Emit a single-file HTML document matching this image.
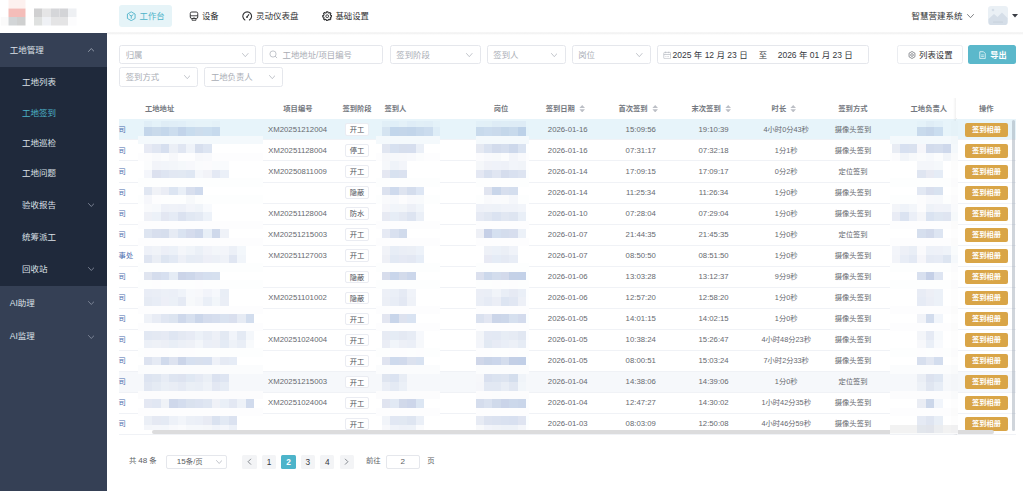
<!DOCTYPE html>
<html lang="zh-CN"><head><meta charset="utf-8"><title>工地签到</title>
<style>
*{box-sizing:border-box;margin:0;padding:0}
html,body{width:1023px;height:491px;overflow:hidden;background:#fff}
body{font-family:"Liberation Sans","Noto Sans CJK SC",sans-serif;color:#606266;position:relative;font-size:8.4px;line-height:1}
.abs{position:absolute}
.t{position:absolute;white-space:nowrap;line-height:10px;height:10px}
.c{transform:translateX(-50%)}
#hdr{position:absolute;left:0;top:0;width:1023px;height:33px;background:#fff}
#hsh{position:absolute;left:107px;top:32.2px;width:916px;height:3.2px;background:linear-gradient(to bottom,rgba(0,0,0,0.02) 0%,rgba(0,0,0,0.06) 35%,rgba(0,0,0,0) 100%)}
#side{position:absolute;left:0;top:33px;width:107px;height:458px;background:#354055}
#side .sub{position:absolute;left:0;top:33.8px;width:107px;height:219.4px;background:#1f293b}
#side .t{color:#dce0e7;font-size:8.5px}
.inp{position:absolute;height:19.5px;border:1px solid #e5e7ec;border-radius:2.5px;background:#fff}
.inp .t{top:3.9px;color:#a9adb5;font-size:8.4px}
.chev{position:absolute;top:7px;width:6px;height:4px}

.th{position:absolute;white-space:nowrap;line-height:10px;height:10px;top:103.6px;font-size:7.3px;font-weight:bold;color:#747880}
.row{position:absolute;left:119px;width:897px;height:21.05px;border-bottom:1px solid #f0f2f6}
.row .t{top:5.2px;font-size:7.3px;color:#66696f}
.row .n{font-size:7.75px;top:5.2px}
.row .lk{color:#4a6aae;left:-0.4px}
.tag{position:absolute;left:226.4px;top:3.8px;width:23.4px;height:12.4px;border:1px solid #eaecf2;border-radius:2px;background:#fff;text-align:center;font-size:7.3px;line-height:11.2px;color:#50545c}
.btn{position:absolute;left:846px;top:3.2px;width:43px;height:14.2px;border-radius:2px;background:#d9a547;color:#fff;font-weight:bold;font-size:7.2px;line-height:14px;text-align:center;white-space:nowrap}
.row .fk{color:#4a72b9;opacity:.85}

.pg{position:absolute;top:454.6px;height:14.2px;border-radius:1.5px;background:#f3f4f6;color:#34373d;font-size:8.3px;text-align:center;line-height:14px;width:14.2px}
.pt{position:absolute;top:456.4px;line-height:10px;font-size:7.35px;color:#606266;white-space:nowrap}
</style></head>
<body>
<div id="hdr">
<svg class="abs" style="left:0;top:0" width="107" height="33"><rect x="8.5" y="0" width="17" height="8.5" fill="#fdf1ef"/><rect x="8.5" y="8.5" width="17" height="8.5" fill="#f4bdb9"/><rect x="0.8" y="17" width="7.7" height="8.5" fill="#fafafa"/><rect x="8.5" y="17" width="8.5" height="8.5" fill="#d2d5d7"/><rect x="17" y="17" width="8.5" height="8.5" fill="#cfd0d0"/><rect x="34" y="8.5" width="8.5" height="8.5" fill="#d0d0d1"/><rect x="42.5" y="8.5" width="8.5" height="8.5" fill="#e5e5e6"/><rect x="51" y="8.5" width="8.5" height="8.5" fill="#d5d6d9"/><rect x="59.5" y="8.5" width="8.5" height="8.5" fill="#d3d4d7"/><rect x="68" y="8.5" width="8.5" height="8.5" fill="#eef0f3"/><rect x="34" y="17" width="8.5" height="8.5" fill="#dfe1e0"/><rect x="42.5" y="17" width="8.5" height="8.5" fill="#eff1f5"/><rect x="51" y="17" width="17" height="8.5" fill="#e4e4e5"/><rect x="68" y="17" width="8.5" height="8.5" fill="#fcfcfd"/></svg>
<div class="abs" style="left:119px;top:5px;width:53px;height:21.5px;background:#e6f4f8;border-radius:3px"></div>
<svg class="abs" style="left:126px;top:10.5px" width="10.5" height="10.5" viewBox="0 0 20 20"><path d="M10 1.6 L17.3 5.8 V14.2 L10 18.4 L2.7 14.2 V5.8 Z" fill="none" stroke="#4db3c9" stroke-width="1.7" stroke-linejoin="round"/><path d="M6.6 7.2 L10 9.6 L13.4 7.2 M10 9.6 V14" fill="none" stroke="#4db3c9" stroke-width="1.7" stroke-linecap="round"/></svg>
<div class="t" style="left:139.6px;top:11px;color:#4db3c9;font-size:8.4px">工作台</div>
<svg class="abs" style="left:188.8px;top:10.5px" width="10" height="10.5" viewBox="0 0 20 21"><rect x="2.5" y="2" width="15" height="13" rx="3" fill="none" stroke="#303133" stroke-width="1.9"/><path d="M2.5 9.5 H17.5" stroke="#303133" stroke-width="1.7"/><path d="M6 15 V18.5 H14 V15" fill="none" stroke="#303133" stroke-width="1.7"/><circle cx="10" cy="12.3" r="1" fill="#303133"/></svg>
<div class="t" style="left:202px;top:11px;color:#303133;font-size:8.4px">设备</div>
<svg class="abs" style="left:242.3px;top:11px" width="10.4" height="10.4" viewBox="0 0 20 20"><path d="M5.6 17.2 A8.4 8.4 0 1 1 14.4 17.2" fill="none" stroke="#303133" stroke-width="2.1" stroke-linecap="round"/><path d="M9.6 11.6 L13 7" stroke="#303133" stroke-width="2" stroke-linecap="round"/><circle cx="9.6" cy="11.6" r="1.7" fill="#303133"/></svg>
<div class="t" style="left:256px;top:11px;color:#303133;font-size:8.5px">灵动仪表盘</div>
<svg class="abs" style="left:321.9px;top:10.7px" width="10.4" height="10.4" viewBox="0 0 20 20"><path d="M8.49 1.33 L11.51 1.33 L11.61 3.29 L13.61 4.12 L15.06 2.80 L17.20 4.94 L15.88 6.39 L16.71 8.39 L18.67 8.49 L18.67 11.51 L16.71 11.61 L15.88 13.61 L17.20 15.06 L15.06 17.20 L13.61 15.88 L11.61 16.71 L11.51 18.67 L8.49 18.67 L8.39 16.71 L6.39 15.88 L4.94 17.20 L2.80 15.06 L4.12 13.61 L3.29 11.61 L1.33 11.51 L1.33 8.49 L3.29 8.39 L4.12 6.39 L2.80 4.94 L4.94 2.80 L6.39 4.12 L8.39 3.29 Z" fill="none" stroke="#303133" stroke-width="2" stroke-linejoin="round"/><circle cx="10" cy="10" r="2.7" fill="none" stroke="#303133" stroke-width="1.8"/></svg>
<div class="t" style="left:335.5px;top:11px;color:#303133;font-size:8.4px">基础设置</div>
<div class="t" style="left:911.5px;top:11px;color:#303133;font-size:8.5px">智慧营建系统</div>
<svg class="abs" style="left:966.6px;top:14.2px" width="7" height="4.2" viewBox="-0.5 -0.5 7 4.2"><path d="M0 0 L3.0 3.2 L6 0" fill="none" stroke="#606266" stroke-width="0.8" stroke-linecap="round" stroke-linejoin="round"/></svg>
<svg class="abs" style="left:988.4px;top:6.2px" width="20" height="19.2" viewBox="0 0 20 19.2"><rect width="20" height="19.2" rx="3.2" fill="#eaf0f5"/><path d="M0.5 13 L6 8 L9.5 11 L14 6.6 L19.5 12 V16 a3.2 3.2 0 0 1 -3.2 3.2 H3.7 A3.2 3.2 0 0 1 0.5 16 Z" fill="#d5dee8"/><circle cx="5" cy="4" r="1.3" fill="#d5dee8"/><rect x="5" y="15.6" width="10" height="1" fill="#c3cdd8" opacity=".7"/></svg>
<svg class="abs" style="left:1012.2px;top:14.3px" width="6" height="4" viewBox="0 0 6 4"><path d="M0 0 H6 L3 3.6 Z" fill="#3a3d45"/></svg>
</div>
<div id="hsh"></div>
<div id="side">
<div class="sub"></div>
<div class="t" style="left:9.8px;top:12px">工地管理</div>
<svg class="abs" style="left:87.6px;top:14.9px" width="6.6" height="4" viewBox="-0.5 -0.5 6.6 4"><path d="M0 3 L2.8 0 L5.6 3" fill="none" stroke="#a4acba" stroke-width="0.8" stroke-linecap="round" stroke-linejoin="round"/></svg>
<div class="t" style="left:22px;top:44.3px">工地列表</div>
<div class="t" style="left:22px;top:74.5px;color:#4db3c9">工地签到</div>
<div class="t" style="left:22px;top:104.6px">工地巡检</div>
<div class="t" style="left:22px;top:134.9px">工地问题</div>
<div class="t" style="left:22px;top:167px">验收报告</div>
<svg class="abs" style="left:87.6px;top:170.1px" width="6.6" height="4" viewBox="-0.5 -0.5 6.6 4"><path d="M0 0 L2.8 3 L5.6 0" fill="none" stroke="#8d96a6" stroke-width="0.8" stroke-linecap="round" stroke-linejoin="round"/></svg>
<div class="t" style="left:22px;top:199.2px">统筹派工</div>
<div class="t" style="left:22px;top:231px">回收站</div>
<svg class="abs" style="left:87.6px;top:234.1px" width="6.6" height="4" viewBox="-0.5 -0.5 6.6 4"><path d="M0 0 L2.8 3 L5.6 0" fill="none" stroke="#8d96a6" stroke-width="0.8" stroke-linecap="round" stroke-linejoin="round"/></svg>
<div class="t" style="left:9.8px;top:265.2px">AI助理</div>
<svg class="abs" style="left:87.6px;top:268.3px" width="6.6" height="4" viewBox="-0.5 -0.5 6.6 4"><path d="M0 0 L2.8 3 L5.6 0" fill="none" stroke="#8d96a6" stroke-width="0.8" stroke-linecap="round" stroke-linejoin="round"/></svg>
<div class="t" style="left:9.8px;top:298.4px">AI监理</div>
<svg class="abs" style="left:87.6px;top:301.5px" width="6.6" height="4" viewBox="-0.5 -0.5 6.6 4"><path d="M0 0 L2.8 3 L5.6 0" fill="none" stroke="#8d96a6" stroke-width="0.8" stroke-linecap="round" stroke-linejoin="round"/></svg>
</div>
<div class="inp" style="left:119px;top:44.8px;width:137px"><div class="t" style="left:5.7px">归属</div><svg class="abs" style="left:122.2px;top:7.2px" width="6.6" height="4.2" viewBox="-0.5 -0.5 6.6 4.2"><path d="M0 0 L2.8 3.2 L5.6 0" fill="none" stroke="#b4b8bf" stroke-width="0.8" stroke-linecap="round" stroke-linejoin="round"/></svg></div>
<div class="inp" style="left:262px;top:44.8px;width:121.4px"><svg class="abs" style="left:6.2px;top:4.6px" width="9" height="9" viewBox="0 0 9 9"><circle cx="4" cy="4" r="3.1" fill="none" stroke="#b4b8bf" stroke-width="0.8"/><path d="M6.3 6.3 L7.8 7.8" stroke="#b4b8bf" stroke-width="0.8" stroke-linecap="round"/></svg><div class="t" style="left:19.6px">工地地址/项目编号</div></div>
<div class="inp" style="left:389.6px;top:44.8px;width:91px"><div class="t" style="left:5.7px">签到阶段</div><svg class="abs" style="left:75.89999999999999px;top:7.2px" width="6.6" height="4.2" viewBox="-0.5 -0.5 6.6 4.2"><path d="M0 0 L2.8 3.2 L5.6 0" fill="none" stroke="#b4b8bf" stroke-width="0.8" stroke-linecap="round" stroke-linejoin="round"/></svg></div>
<div class="inp" style="left:486.6px;top:44.8px;width:79px"><div class="t" style="left:5.7px">签到人</div><svg class="abs" style="left:63.300000000000026px;top:7.2px" width="6.6" height="4.2" viewBox="-0.5 -0.5 6.6 4.2"><path d="M0 0 L2.8 3.2 L5.6 0" fill="none" stroke="#b4b8bf" stroke-width="0.8" stroke-linecap="round" stroke-linejoin="round"/></svg></div>
<div class="inp" style="left:571.5px;top:44.8px;width:79px"><div class="t" style="left:5.7px">岗位</div><svg class="abs" style="left:63.59999999999998px;top:7.2px" width="6.6" height="4.2" viewBox="-0.5 -0.5 6.6 4.2"><path d="M0 0 L2.8 3.2 L5.6 0" fill="none" stroke="#b4b8bf" stroke-width="0.8" stroke-linecap="round" stroke-linejoin="round"/></svg></div>
<div class="inp" style="left:656.5px;top:44.8px;width:212.3px"><svg class="abs" style="left:5.6px;top:5.1px" width="8.4" height="8.6" viewBox="0 0 16 16"><rect x="1.5" y="2.5" width="13" height="12" rx="1.5" fill="none" stroke="#b4b8c0" stroke-width="1.3"/><path d="M1.5 6.5 H14.5 M5 1 V4 M11 1 V4" stroke="#b4b8c0" stroke-width="1.3"/><path d="M4.5 10.5 h1.6 M7.2 10.5 h1.6 M9.9 10.5 h1.6" stroke="#b4b8c0" stroke-width="1.2"/></svg><div class="t" style="left:15px;color:#35383e;font-size:8.5px">2025 年 12 月 23 日</div><div class="t" style="left:101.3px;color:#35383e;font-size:8.3px">至</div><div class="t" style="left:120.2px;color:#35383e;font-size:8.5px">2026 年 01 月 23 日</div></div>
<div class="inp" style="left:897.3px;top:44.8px;width:65.3px;height:19.5px;border-color:#ebedf1"><svg class="abs" style="left:9.6px;top:5px" width="8" height="8" viewBox="0 0 16 16"><path d="M8 1 L13.9 4.4 V11.6 L8 15 L2.1 11.6 V4.4 Z" fill="none" stroke="#50545c" stroke-width="1.25" stroke-linejoin="round"/><circle cx="8" cy="8" r="2.7" fill="none" stroke="#50545c" stroke-width="1.2"/></svg><div class="t" style="left:20.8px;color:#303133;font-size:8.4px">列表设置</div></div>
<div class="abs" style="left:968.4px;top:44.8px;width:47.8px;height:19.5px;background:#5bb8cb;border-radius:2.5px"><svg class="abs" style="left:10.6px;top:6px" width="7" height="8.4" viewBox="0 0 14 17"><path d="M1.5 1.5 H9 L12.5 5 V15.5 H1.5 Z" fill="none" stroke="#fff" stroke-width="1.5" stroke-linejoin="round"/><path d="M4.2 8 H9.8 M4.2 11.4 H9.8" stroke="#fff" stroke-width="1.4"/></svg><div class="t" style="left:21.8px;top:6.3px;color:#fff;font-size:8.2px;font-weight:bold">导出</div></div>
<div class="inp" style="left:119px;top:67px;width:78.6px"><div class="t" style="left:5.7px">签到方式</div><svg class="abs" style="left:63.7px;top:7.2px" width="6.6" height="4.2" viewBox="-0.5 -0.5 6.6 4.2"><path d="M0 0 L2.8 3.2 L5.6 0" fill="none" stroke="#b4b8bf" stroke-width="0.8" stroke-linecap="round" stroke-linejoin="round"/></svg></div>
<div class="inp" style="left:204.2px;top:67px;width:78.5px"><div class="t" style="left:5.7px">工地负责人</div><svg class="abs" style="left:63.500000000000014px;top:7.2px" width="6.6" height="4.2" viewBox="-0.5 -0.5 6.6 4.2"><path d="M0 0 L2.8 3.2 L5.6 0" fill="none" stroke="#b4b8bf" stroke-width="0.8" stroke-linecap="round" stroke-linejoin="round"/></svg></div>
<div id="tbl">
<div class="abs" style="left:119px;top:118.9px;width:897px;height:1px;background:#edf0f5"></div>
<div class="th" style="left:145px">工地地址</div>
<div class="th c" style="left:297.9px">项目编号</div>
<div class="th c" style="left:357px">签到阶段</div>
<div class="th" style="left:384.5px">签到人</div>
<div class="th c" style="left:501.1px">岗位</div>
<div class="th" style="left:545.7px">签到日期</div>
<svg class="abs" style="left:579px;top:104.8px" width="6.4" height="7.6" viewBox="0 0 6.4 7.6"><path d="M3.2 0 L6 3 H0.4 Z M3.2 7.4 L6 4.3 H0.4 Z" fill="#bcbfc6"/></svg>
<div class="th" style="left:618.4px">首次签到</div>
<svg class="abs" style="left:652px;top:104.8px" width="6.4" height="7.6" viewBox="0 0 6.4 7.6"><path d="M3.2 0 L6 3 H0.4 Z M3.2 7.4 L6 4.3 H0.4 Z" fill="#bcbfc6"/></svg>
<div class="th" style="left:691.5px">末次签到</div>
<svg class="abs" style="left:725.2px;top:104.8px" width="6.4" height="7.6" viewBox="0 0 6.4 7.6"><path d="M3.2 0 L6 3 H0.4 Z M3.2 7.4 L6 4.3 H0.4 Z" fill="#bcbfc6"/></svg>
<div class="th" style="left:771.6px">时长</div>
<svg class="abs" style="left:790.2px;top:104.8px" width="6.4" height="7.6" viewBox="0 0 6.4 7.6"><path d="M3.2 0 L6 3 H0.4 Z M3.2 7.4 L6 4.3 H0.4 Z" fill="#bcbfc6"/></svg>
<div class="th c" style="left:852.9px">签到方式</div>
<div class="th c" style="left:928.8px">工地负责人</div>
<div class="row" style="top:119.40px;background:#e7f4fa">
<div class="t lk">司</div>
<div class="t n c" style="left:178.60000000000002px">XM20251212004</div>
<div class="tag">开工</div>
<div class="t n c" style="left:448.70000000000005px">2026-01-16</div>
<div class="t n c" style="left:521.7px">15:09:56</div>
<div class="t n c" style="left:594.6px">19:10:39</div>
<div class="t c" style="left:667.2px">4小时0分43秒</div>
<div class="t c" style="left:734px">摄像头签到</div>
</div>
<div class="row" style="top:140.45px">
<div class="t lk">司</div>
<div class="t n c" style="left:178.60000000000002px">XM20251128004</div>
<div class="tag">停工</div>
<div class="t n c" style="left:448.70000000000005px">2026-01-16</div>
<div class="t n c" style="left:521.7px">07:31:17</div>
<div class="t n c" style="left:594.6px">07:32:18</div>
<div class="t c" style="left:667.2px">1分1秒</div>
<div class="t c" style="left:734px">摄像头签到</div>
</div>
<div class="row" style="top:161.50px">
<div class="t lk">司</div>
<div class="t n c" style="left:178.60000000000002px">XM20250811009</div>
<div class="tag">开工</div>
<div class="t n c" style="left:448.70000000000005px">2026-01-14</div>
<div class="t n c" style="left:521.7px">17:09:15</div>
<div class="t n c" style="left:594.6px">17:09:17</div>
<div class="t c" style="left:667.2px">0分2秒</div>
<div class="t c" style="left:734px">定位签到</div>
</div>
<div class="row" style="top:182.55px">
<div class="t lk">司</div>
<div class="tag">隐蔽</div>
<div class="t n c" style="left:448.70000000000005px">2026-01-14</div>
<div class="t n c" style="left:521.7px">11:25:34</div>
<div class="t n c" style="left:594.6px">11:26:34</div>
<div class="t c" style="left:667.2px">1分0秒</div>
<div class="t c" style="left:734px">摄像头签到</div>
</div>
<div class="row" style="top:203.60px">
<div class="t lk">司</div>
<div class="t n c" style="left:178.60000000000002px">XM20251128004</div>
<div class="tag">防水</div>
<div class="t n c" style="left:448.70000000000005px">2026-01-10</div>
<div class="t n c" style="left:521.7px">07:28:04</div>
<div class="t n c" style="left:594.6px">07:29:04</div>
<div class="t c" style="left:667.2px">1分0秒</div>
<div class="t c" style="left:734px">摄像头签到</div>
</div>
<div class="row" style="top:224.65px">
<div class="t lk">司</div>
<div class="t n c" style="left:178.60000000000002px">XM20251215003</div>
<div class="tag">开工</div>
<div class="t n c" style="left:448.70000000000005px">2026-01-07</div>
<div class="t n c" style="left:521.7px">21:44:35</div>
<div class="t n c" style="left:594.6px">21:45:35</div>
<div class="t c" style="left:667.2px">1分0秒</div>
<div class="t c" style="left:734px">定位签到</div>
</div>
<div class="row" style="top:245.70px">
<div class="t lk">事处</div>
<div class="t n c" style="left:178.60000000000002px">XM20251127003</div>
<div class="tag">开工</div>
<div class="t n c" style="left:448.70000000000005px">2026-01-07</div>
<div class="t n c" style="left:521.7px">08:50:50</div>
<div class="t n c" style="left:594.6px">08:51:50</div>
<div class="t c" style="left:667.2px">1分0秒</div>
<div class="t c" style="left:734px">摄像头签到</div>
</div>
<div class="row" style="top:266.75px">
<div class="t lk">司</div>
<div class="tag">隐蔽</div>
<div class="t n c" style="left:448.70000000000005px">2026-01-06</div>
<div class="t n c" style="left:521.7px">13:03:28</div>
<div class="t n c" style="left:594.6px">13:12:37</div>
<div class="t c" style="left:667.2px">9分9秒</div>
<div class="t c" style="left:734px">摄像头签到</div>
</div>
<div class="row" style="top:287.80px">
<div class="t lk">司</div>
<div class="t n c" style="left:178.60000000000002px">XM20251101002</div>
<div class="tag">隐蔽</div>
<div class="t n c" style="left:448.70000000000005px">2026-01-06</div>
<div class="t n c" style="left:521.7px">12:57:20</div>
<div class="t n c" style="left:594.6px">12:58:20</div>
<div class="t c" style="left:667.2px">1分0秒</div>
<div class="t c" style="left:734px">摄像头签到</div>
</div>
<div class="row" style="top:308.85px">
<div class="t lk">司</div>
<div class="tag">开工</div>
<div class="t n c" style="left:448.70000000000005px">2026-01-05</div>
<div class="t n c" style="left:521.7px">14:01:15</div>
<div class="t n c" style="left:594.6px">14:02:15</div>
<div class="t c" style="left:667.2px">1分0秒</div>
<div class="t c" style="left:734px">摄像头签到</div>
</div>
<div class="row" style="top:329.90px">
<div class="t lk">司</div>
<div class="t n c" style="left:178.60000000000002px">XM20251024004</div>
<div class="tag">开工</div>
<div class="t n c" style="left:448.70000000000005px">2026-01-05</div>
<div class="t n c" style="left:521.7px">10:38:24</div>
<div class="t n c" style="left:594.6px">15:26:47</div>
<div class="t c" style="left:667.2px">4小时48分23秒</div>
<div class="t c" style="left:734px">摄像头签到</div>
</div>
<div class="row" style="top:350.95px">
<div class="t lk">司</div>
<div class="tag">开工</div>
<div class="t n c" style="left:448.70000000000005px">2026-01-05</div>
<div class="t n c" style="left:521.7px">08:00:51</div>
<div class="t n c" style="left:594.6px">15:03:24</div>
<div class="t c" style="left:667.2px">7小时2分33秒</div>
<div class="t c" style="left:734px">摄像头签到</div>
</div>
<div class="row" style="top:372.00px;background:#f6f8fb">
<div class="t lk">司</div>
<div class="t n c" style="left:178.60000000000002px">XM20251215003</div>
<div class="tag">开工</div>
<div class="t n c" style="left:448.70000000000005px">2026-01-04</div>
<div class="t n c" style="left:521.7px">14:38:06</div>
<div class="t n c" style="left:594.6px">14:39:06</div>
<div class="t c" style="left:667.2px">1分0秒</div>
<div class="t c" style="left:734px">定位签到</div>
</div>
<div class="row" style="top:393.05px">
<div class="t lk">司</div>
<div class="t n c" style="left:178.60000000000002px">XM20251024004</div>
<div class="tag">开工</div>
<div class="t n c" style="left:448.70000000000005px">2026-01-04</div>
<div class="t n c" style="left:521.7px">12:47:27</div>
<div class="t n c" style="left:594.6px">14:30:02</div>
<div class="t c" style="left:667.2px">1小时42分35秒</div>
<div class="t c" style="left:734px">摄像头签到</div>
</div>
<div class="row" style="top:414.10px">
<div class="t lk">司</div>
<div class="tag">开工</div>
<div class="t n c" style="left:448.70000000000005px">2026-01-03</div>
<div class="t n c" style="left:521.7px">08:03:09</div>
<div class="t n c" style="left:594.6px">12:50:08</div>
<div class="t c" style="left:667.2px">4小时46分59秒</div>
<div class="t c" style="left:734px">摄像头签到</div>
</div>
<div class="abs" style="left:952.6px;top:98px;width:4px;height:336.6px;background:linear-gradient(90deg,rgba(0,0,0,0),rgba(0,0,0,0.075))"></div>
<div class="abs" style="left:956.4px;top:98px;width:59.60000000000002px;height:20.4px;background:#fff"></div>
<div class="th c" style="left:986.2px">操作</div>
<div class="abs" style="left:956.4px;top:119.40px;width:59.60000000000002px;height:20.05px;background:#e7f4fa"><div class="btn" style="left:8.6px">签到相册</div></div>
<div class="abs" style="left:956.4px;top:140.45px;width:59.60000000000002px;height:20.05px;background:#fff"><div class="btn" style="left:8.6px">签到相册</div></div>
<div class="abs" style="left:956.4px;top:161.50px;width:59.60000000000002px;height:20.05px;background:#fff"><div class="btn" style="left:8.6px">签到相册</div></div>
<div class="abs" style="left:956.4px;top:182.55px;width:59.60000000000002px;height:20.05px;background:#fff"><div class="btn" style="left:8.6px">签到相册</div></div>
<div class="abs" style="left:956.4px;top:203.60px;width:59.60000000000002px;height:20.05px;background:#fff"><div class="btn" style="left:8.6px">签到相册</div></div>
<div class="abs" style="left:956.4px;top:224.65px;width:59.60000000000002px;height:20.05px;background:#fff"><div class="btn" style="left:8.6px">签到相册</div></div>
<div class="abs" style="left:956.4px;top:245.70px;width:59.60000000000002px;height:20.05px;background:#fff"><div class="btn" style="left:8.6px">签到相册</div></div>
<div class="abs" style="left:956.4px;top:266.75px;width:59.60000000000002px;height:20.05px;background:#fff"><div class="btn" style="left:8.6px">签到相册</div></div>
<div class="abs" style="left:956.4px;top:287.80px;width:59.60000000000002px;height:20.05px;background:#fff"><div class="btn" style="left:8.6px">签到相册</div></div>
<div class="abs" style="left:956.4px;top:308.85px;width:59.60000000000002px;height:20.05px;background:#fff"><div class="btn" style="left:8.6px">签到相册</div></div>
<div class="abs" style="left:956.4px;top:329.90px;width:59.60000000000002px;height:20.05px;background:#fff"><div class="btn" style="left:8.6px">签到相册</div></div>
<div class="abs" style="left:956.4px;top:350.95px;width:59.60000000000002px;height:20.05px;background:#fff"><div class="btn" style="left:8.6px">签到相册</div></div>
<div class="abs" style="left:956.4px;top:372.00px;width:59.60000000000002px;height:20.05px;background:#f6f8fb"><div class="btn" style="left:8.6px">签到相册</div></div>
<div class="abs" style="left:956.4px;top:393.05px;width:59.60000000000002px;height:20.05px;background:#fff"><div class="btn" style="left:8.6px">签到相册</div></div>
<div class="abs" style="left:956.4px;top:414.10px;width:59.60000000000002px;height:20.05px;background:#fff"><div class="btn" style="left:8.6px">签到相册</div></div>
<div class="abs" style="left:152px;top:430.2px;width:842.4px;height:3.6px;border-radius:2px;background:#dcdcdd"></div>
<div class="abs" style="left:1012.2px;top:120px;width:3.3px;height:311px;border-radius:2px;background:rgba(144,154,170,0.42)"></div>
<svg class="abs" style="left:0;top:0" width="1023" height="491" shape-rendering="crispEdges"><rect x="138" y="121" width="5.9" height="6.2" fill="#e7f4fa"/><rect x="143.9" y="121" width="8.5" height="6.2" fill="#e0eef7"/><rect x="152.4" y="121" width="8.5" height="6.2" fill="#e4f2f9"/><rect x="160.9" y="121" width="8.5" height="6.2" fill="#dfedf6"/><rect x="169.4" y="121" width="8.5" height="6.2" fill="#e0eef7"/><rect x="177.9" y="121" width="8.5" height="6.2" fill="#e1eff8"/><rect x="186.4" y="121" width="8.5" height="6.2" fill="#e5f2f9"/><rect x="194.9" y="121" width="17" height="6.2" fill="#e6f3f9"/><rect x="211.9" y="121" width="8.5" height="6.2" fill="#e4f1f8"/><rect x="220.4" y="121" width="42.1" height="6.2" fill="#e7f4fa"/><rect x="138" y="127.2" width="5.9" height="8.5" fill="#e7f4fa"/><rect x="143.9" y="127.2" width="8.5" height="8.5" fill="#c4d6ea"/><rect x="152.4" y="127.2" width="8.5" height="8.5" fill="#c9daeb"/><rect x="160.9" y="127.2" width="8.5" height="8.5" fill="#c4d7eb"/><rect x="169.4" y="127.2" width="8.5" height="8.5" fill="#ccddee"/><rect x="177.9" y="127.2" width="8.5" height="8.5" fill="#c2d4ea"/><rect x="186.4" y="127.2" width="8.5" height="8.5" fill="#c8dcee"/><rect x="194.9" y="127.2" width="8.5" height="8.5" fill="#cddded"/><rect x="203.4" y="127.2" width="8.5" height="8.5" fill="#cbdeef"/><rect x="211.9" y="127.2" width="8.5" height="8.5" fill="#c7daed"/><rect x="220.4" y="127.2" width="42.1" height="8.5" fill="#e7f4fa"/><rect x="138" y="135.7" width="124.5" height="8.5" fill="#f4f9fc"/><rect x="138" y="144.2" width="5.9" height="8.5" fill="#ffffff"/><rect x="143.9" y="144.2" width="8.5" height="8.5" fill="#e7eaf4"/><rect x="152.4" y="144.2" width="8.5" height="8.5" fill="#e0e6f2"/><rect x="160.9" y="144.2" width="8.5" height="8.5" fill="#d6dfef"/><rect x="169.4" y="144.2" width="8.5" height="8.5" fill="#ebeff6"/><rect x="177.9" y="144.2" width="8.5" height="8.5" fill="#e0e6f2"/><rect x="186.4" y="144.2" width="8.5" height="8.5" fill="#eff3f9"/><rect x="194.9" y="144.2" width="8.5" height="8.5" fill="#d7dfee"/><rect x="203.4" y="144.2" width="8.5" height="8.5" fill="#dde5f2"/><rect x="211.9" y="144.2" width="50.6" height="8.5" fill="#ffffff"/><rect x="138" y="152.7" width="5.9" height="8.5" fill="#fdfdfe"/><rect x="143.9" y="152.7" width="8.5" height="8.5" fill="#fcfcfd"/><rect x="152.4" y="152.7" width="8.5" height="8.5" fill="#f9fafc"/><rect x="160.9" y="152.7" width="8.5" height="8.5" fill="#fbfcfd"/><rect x="169.4" y="152.7" width="8.5" height="8.5" fill="#f7f8fb"/><rect x="177.9" y="152.7" width="17" height="8.5" fill="#fdfdfe"/><rect x="194.9" y="152.7" width="8.5" height="8.5" fill="#f7f8fb"/><rect x="203.4" y="152.7" width="8.5" height="8.5" fill="#f8f9fc"/><rect x="211.9" y="152.7" width="50.6" height="8.5" fill="#fdfdfe"/><rect x="138" y="161.2" width="5.9" height="8.5" fill="#ffffff"/><rect x="143.9" y="161.2" width="8.5" height="8.5" fill="#fbfcfd"/><rect x="152.4" y="161.2" width="8.5" height="8.5" fill="#f2f4f9"/><rect x="160.9" y="161.2" width="8.5" height="8.5" fill="#f2f5fa"/><rect x="169.4" y="161.2" width="8.5" height="8.5" fill="#f3f6fa"/><rect x="177.9" y="161.2" width="8.5" height="8.5" fill="#f5f8fb"/><rect x="186.4" y="161.2" width="8.5" height="8.5" fill="#f7f8fc"/><rect x="194.9" y="161.2" width="8.5" height="8.5" fill="#fafbfd"/><rect x="203.4" y="161.2" width="8.5" height="8.5" fill="#fbfbfd"/><rect x="211.9" y="161.2" width="17" height="8.5" fill="#f9fbfd"/><rect x="228.9" y="161.2" width="33.6" height="8.5" fill="#ffffff"/><rect x="138" y="169.7" width="5.9" height="8.5" fill="#ffffff"/><rect x="143.9" y="169.7" width="8.5" height="8.5" fill="#f4f6fb"/><rect x="152.4" y="169.7" width="8.5" height="8.5" fill="#dce1ef"/><rect x="160.9" y="169.7" width="8.5" height="8.5" fill="#dee5f2"/><rect x="169.4" y="169.7" width="8.5" height="8.5" fill="#e2e8f3"/><rect x="177.9" y="169.7" width="8.5" height="8.5" fill="#e2e9f3"/><rect x="186.4" y="169.7" width="8.5" height="8.5" fill="#dfe7f3"/><rect x="194.9" y="169.7" width="8.5" height="8.5" fill="#f5f7fb"/><rect x="203.4" y="169.7" width="8.5" height="8.5" fill="#f2f3f8"/><rect x="211.9" y="169.7" width="8.5" height="8.5" fill="#e4e9f4"/><rect x="220.4" y="169.7" width="8.5" height="8.5" fill="#ebf0f8"/><rect x="228.9" y="169.7" width="33.6" height="8.5" fill="#ffffff"/><rect x="138" y="178.2" width="124.5" height="8.5" fill="#fdfefe"/><rect x="138" y="186.7" width="5.9" height="8.5" fill="#ffffff"/><rect x="143.9" y="186.7" width="8.5" height="8.5" fill="#e1e7f2"/><rect x="152.4" y="186.7" width="8.5" height="8.5" fill="#f0f2f7"/><rect x="160.9" y="186.7" width="8.5" height="8.5" fill="#eaedf5"/><rect x="169.4" y="186.7" width="8.5" height="8.5" fill="#dce5f2"/><rect x="177.9" y="186.7" width="8.5" height="8.5" fill="#e9eff7"/><rect x="186.4" y="186.7" width="8.5" height="8.5" fill="#d8dfee"/><rect x="194.9" y="186.7" width="8.5" height="8.5" fill="#cfdaed"/><rect x="203.4" y="186.7" width="59.1" height="8.5" fill="#ffffff"/><rect x="138" y="195.2" width="5.9" height="8.5" fill="#fdfefe"/><rect x="143.9" y="195.2" width="8.5" height="8.5" fill="#f6f7fb"/><rect x="152.4" y="195.2" width="8.5" height="8.5" fill="#fdfdfe"/><rect x="160.9" y="195.2" width="25.5" height="8.5" fill="#fdfefe"/><rect x="186.4" y="195.2" width="8.5" height="8.5" fill="#f7f9fb"/><rect x="194.9" y="195.2" width="8.5" height="8.5" fill="#fcfdfd"/><rect x="203.4" y="195.2" width="59.1" height="8.5" fill="#fdfefe"/><rect x="138" y="203.7" width="5.9" height="8.5" fill="#ffffff"/><rect x="143.9" y="203.7" width="8.5" height="8.5" fill="#f9fafc"/><rect x="152.4" y="203.7" width="8.5" height="8.5" fill="#f7f9fc"/><rect x="160.9" y="203.7" width="8.5" height="8.5" fill="#eef1f8"/><rect x="169.4" y="203.7" width="8.5" height="8.5" fill="#eff2f8"/><rect x="177.9" y="203.7" width="8.5" height="8.5" fill="#eef1f8"/><rect x="186.4" y="203.7" width="8.5" height="8.5" fill="#f3f5fa"/><rect x="194.9" y="203.7" width="8.5" height="8.5" fill="#f0f4f9"/><rect x="203.4" y="203.7" width="8.5" height="8.5" fill="#f8fafd"/><rect x="211.9" y="203.7" width="50.6" height="8.5" fill="#ffffff"/><rect x="138" y="212.2" width="5.9" height="8.5" fill="#ffffff"/><rect x="143.9" y="212.2" width="8.5" height="8.5" fill="#eff1f7"/><rect x="152.4" y="212.2" width="8.5" height="8.5" fill="#ecf1f8"/><rect x="160.9" y="212.2" width="8.5" height="8.5" fill="#e3e7f2"/><rect x="169.4" y="212.2" width="8.5" height="8.5" fill="#e5ebf5"/><rect x="177.9" y="212.2" width="8.5" height="8.5" fill="#dbe2f0"/><rect x="186.4" y="212.2" width="8.5" height="8.5" fill="#e1e8f3"/><rect x="194.9" y="212.2" width="8.5" height="8.5" fill="#e4eaf4"/><rect x="203.4" y="212.2" width="8.5" height="8.5" fill="#edf2f9"/><rect x="211.9" y="212.2" width="50.6" height="8.5" fill="#ffffff"/><rect x="138" y="220.7" width="124.5" height="8.5" fill="#fdfdfe"/><rect x="138" y="229.2" width="5.9" height="8.5" fill="#ffffff"/><rect x="143.9" y="229.2" width="8.5" height="8.5" fill="#dee5f1"/><rect x="152.4" y="229.2" width="8.5" height="8.5" fill="#d8dfee"/><rect x="160.9" y="229.2" width="8.5" height="8.5" fill="#d6deed"/><rect x="169.4" y="229.2" width="8.5" height="8.5" fill="#e6ebf4"/><rect x="177.9" y="229.2" width="8.5" height="8.5" fill="#dae3f1"/><rect x="186.4" y="229.2" width="8.5" height="8.5" fill="#d5dced"/><rect x="194.9" y="229.2" width="8.5" height="8.5" fill="#ced8eb"/><rect x="203.4" y="229.2" width="8.5" height="8.5" fill="#e8eff7"/><rect x="211.9" y="229.2" width="8.5" height="8.5" fill="#cfd9eb"/><rect x="220.4" y="229.2" width="8.5" height="8.5" fill="#eff2f8"/><rect x="228.9" y="229.2" width="33.6" height="8.5" fill="#ffffff"/><rect x="138" y="237.7" width="124.5" height="8.5" fill="#fdfdfe"/><rect x="138" y="246.2" width="5.9" height="8.5" fill="#ffffff"/><rect x="143.9" y="246.2" width="8.5" height="8.5" fill="#eef1f8"/><rect x="152.4" y="246.2" width="8.5" height="8.5" fill="#f0f3f8"/><rect x="160.9" y="246.2" width="8.5" height="8.5" fill="#eceff7"/><rect x="169.4" y="246.2" width="8.5" height="8.5" fill="#ecf1f8"/><rect x="177.9" y="246.2" width="8.5" height="8.5" fill="#f4f6fa"/><rect x="186.4" y="246.2" width="8.5" height="8.5" fill="#f0f4f9"/><rect x="194.9" y="246.2" width="8.5" height="8.5" fill="#ebf0f7"/><rect x="203.4" y="246.2" width="8.5" height="8.5" fill="#f1f3f9"/><rect x="211.9" y="246.2" width="8.5" height="8.5" fill="#f3f6fa"/><rect x="220.4" y="246.2" width="8.5" height="8.5" fill="#f3f5fa"/><rect x="228.9" y="246.2" width="8.5" height="8.5" fill="#ecf0f7"/><rect x="237.4" y="246.2" width="8.5" height="8.5" fill="#f3f7fb"/><rect x="245.9" y="246.2" width="16.6" height="8.5" fill="#ffffff"/><rect x="138" y="254.7" width="5.9" height="8.5" fill="#ffffff"/><rect x="143.9" y="254.7" width="8.5" height="8.5" fill="#dfe5f1"/><rect x="152.4" y="254.7" width="8.5" height="8.5" fill="#eaeef5"/><rect x="160.9" y="254.7" width="8.5" height="8.5" fill="#dde5f1"/><rect x="169.4" y="254.7" width="8.5" height="8.5" fill="#e2e9f4"/><rect x="177.9" y="254.7" width="8.5" height="8.5" fill="#edf0f7"/><rect x="186.4" y="254.7" width="8.5" height="8.5" fill="#e6ecf5"/><rect x="194.9" y="254.7" width="8.5" height="8.5" fill="#e7ecf5"/><rect x="203.4" y="254.7" width="8.5" height="8.5" fill="#edeff7"/><rect x="211.9" y="254.7" width="8.5" height="8.5" fill="#ecf0f7"/><rect x="220.4" y="254.7" width="8.5" height="8.5" fill="#eff2f8"/><rect x="228.9" y="254.7" width="8.5" height="8.5" fill="#e0e6f2"/><rect x="237.4" y="254.7" width="8.5" height="8.5" fill="#f1f5fa"/><rect x="245.9" y="254.7" width="16.6" height="8.5" fill="#ffffff"/><rect x="138" y="263.2" width="124.5" height="8.5" fill="#fdfefe"/><rect x="138" y="271.7" width="5.9" height="8.5" fill="#ffffff"/><rect x="143.9" y="271.7" width="8.5" height="8.5" fill="#e0e5f0"/><rect x="152.4" y="271.7" width="8.5" height="8.5" fill="#d5dded"/><rect x="160.9" y="271.7" width="8.5" height="8.5" fill="#d7e0f0"/><rect x="169.4" y="271.7" width="8.5" height="8.5" fill="#e5ecf5"/><rect x="177.9" y="271.7" width="8.5" height="8.5" fill="#cbd4e8"/><rect x="186.4" y="271.7" width="8.5" height="8.5" fill="#cdd7ea"/><rect x="194.9" y="271.7" width="8.5" height="8.5" fill="#d4dced"/><rect x="203.4" y="271.7" width="8.5" height="8.5" fill="#d5dfef"/><rect x="211.9" y="271.7" width="8.5" height="8.5" fill="#d6e0ef"/><rect x="220.4" y="271.7" width="42.1" height="8.5" fill="#ffffff"/><rect x="138" y="280.2" width="14.4" height="8.5" fill="#fdfefe"/><rect x="152.4" y="280.2" width="8.5" height="8.5" fill="#fdfdfe"/><rect x="160.9" y="280.2" width="34" height="8.5" fill="#fdfefe"/><rect x="194.9" y="280.2" width="8.5" height="8.5" fill="#fdfdfe"/><rect x="203.4" y="280.2" width="59.1" height="8.5" fill="#fdfefe"/><rect x="138" y="288.7" width="5.9" height="8.5" fill="#ffffff"/><rect x="143.9" y="288.7" width="8.5" height="8.5" fill="#e9edf6"/><rect x="152.4" y="288.7" width="8.5" height="8.5" fill="#eaeef6"/><rect x="160.9" y="288.7" width="8.5" height="8.5" fill="#ecf0f7"/><rect x="169.4" y="288.7" width="8.5" height="8.5" fill="#ebeff7"/><rect x="177.9" y="288.7" width="8.5" height="8.5" fill="#eff3f9"/><rect x="186.4" y="288.7" width="8.5" height="8.5" fill="#f7f9fc"/><rect x="194.9" y="288.7" width="8.5" height="8.5" fill="#f7f8fb"/><rect x="203.4" y="288.7" width="8.5" height="8.5" fill="#f2f4fa"/><rect x="211.9" y="288.7" width="8.5" height="8.5" fill="#f6f8fc"/><rect x="220.4" y="288.7" width="8.5" height="8.5" fill="#e9eef6"/><rect x="228.9" y="288.7" width="33.6" height="8.5" fill="#ffffff"/><rect x="138" y="297.2" width="5.9" height="8.5" fill="#ffffff"/><rect x="143.9" y="297.2" width="8.5" height="8.5" fill="#e6ebf4"/><rect x="152.4" y="297.2" width="8.5" height="8.5" fill="#e8edf6"/><rect x="160.9" y="297.2" width="8.5" height="8.5" fill="#edeff7"/><rect x="169.4" y="297.2" width="8.5" height="8.5" fill="#ebf0f7"/><rect x="177.9" y="297.2" width="8.5" height="8.5" fill="#e5eaf4"/><rect x="186.4" y="297.2" width="8.5" height="8.5" fill="#f7f9fb"/><rect x="194.9" y="297.2" width="8.5" height="8.5" fill="#f4f6fa"/><rect x="203.4" y="297.2" width="8.5" height="8.5" fill="#eaeff7"/><rect x="211.9" y="297.2" width="8.5" height="8.5" fill="#f2f6fa"/><rect x="220.4" y="297.2" width="8.5" height="8.5" fill="#eaeef6"/><rect x="228.9" y="297.2" width="33.6" height="8.5" fill="#ffffff"/><rect x="138" y="305.7" width="124.5" height="8.5" fill="#fdfdfe"/><rect x="138" y="314.2" width="5.9" height="8.5" fill="#ffffff"/><rect x="143.9" y="314.2" width="8.5" height="8.5" fill="#eff2f8"/><rect x="152.4" y="314.2" width="8.5" height="8.5" fill="#e8ecf5"/><rect x="160.9" y="314.2" width="8.5" height="8.5" fill="#e0e6f2"/><rect x="169.4" y="314.2" width="8.5" height="8.5" fill="#dce4f0"/><rect x="177.9" y="314.2" width="8.5" height="8.5" fill="#ced8eb"/><rect x="186.4" y="314.2" width="8.5" height="8.5" fill="#d7e0ef"/><rect x="194.9" y="314.2" width="8.5" height="8.5" fill="#cbd6ea"/><rect x="203.4" y="314.2" width="8.5" height="8.5" fill="#d4dced"/><rect x="211.9" y="314.2" width="8.5" height="8.5" fill="#d6deee"/><rect x="220.4" y="314.2" width="8.5" height="8.5" fill="#d9e2f0"/><rect x="228.9" y="314.2" width="8.5" height="8.5" fill="#d9dfee"/><rect x="237.4" y="314.2" width="8.5" height="8.5" fill="#e6ebf4"/><rect x="245.9" y="314.2" width="8.5" height="8.5" fill="#d2ddee"/><rect x="254.4" y="314.2" width="8.1" height="8.5" fill="#ffffff"/><rect x="138" y="322.7" width="124.5" height="8.5" fill="#fdfdfe"/><rect x="138" y="331.2" width="5.9" height="8.5" fill="#ffffff"/><rect x="143.9" y="331.2" width="8.5" height="8.5" fill="#e2e8f3"/><rect x="152.4" y="331.2" width="8.5" height="8.5" fill="#e4e9f3"/><rect x="160.9" y="331.2" width="8.5" height="8.5" fill="#e6eaf4"/><rect x="169.4" y="331.2" width="8.5" height="8.5" fill="#dfe6f2"/><rect x="177.9" y="331.2" width="8.5" height="8.5" fill="#e4e9f3"/><rect x="186.4" y="331.2" width="8.5" height="8.5" fill="#e7ebf5"/><rect x="194.9" y="331.2" width="8.5" height="8.5" fill="#ecf1f8"/><rect x="203.4" y="331.2" width="8.5" height="8.5" fill="#e7ecf5"/><rect x="211.9" y="331.2" width="8.5" height="8.5" fill="#edf0f7"/><rect x="220.4" y="331.2" width="8.5" height="8.5" fill="#e3e9f3"/><rect x="228.9" y="331.2" width="8.5" height="8.5" fill="#f1f4fa"/><rect x="237.4" y="331.2" width="8.5" height="8.5" fill="#e4eaf4"/><rect x="245.9" y="331.2" width="8.5" height="8.5" fill="#f4f7fb"/><rect x="254.4" y="331.2" width="8.1" height="8.5" fill="#ffffff"/><rect x="138" y="339.7" width="5.9" height="8.5" fill="#ffffff"/><rect x="143.9" y="339.7" width="8.5" height="8.5" fill="#ecf0f7"/><rect x="152.4" y="339.7" width="8.5" height="8.5" fill="#eef1f7"/><rect x="160.9" y="339.7" width="8.5" height="8.5" fill="#eceff6"/><rect x="169.4" y="339.7" width="8.5" height="8.5" fill="#e8eef6"/><rect x="177.9" y="339.7" width="8.5" height="8.5" fill="#ecf0f7"/><rect x="186.4" y="339.7" width="8.5" height="8.5" fill="#eef1f7"/><rect x="194.9" y="339.7" width="8.5" height="8.5" fill="#f3f6fa"/><rect x="203.4" y="339.7" width="8.5" height="8.5" fill="#ebeff7"/><rect x="211.9" y="339.7" width="8.5" height="8.5" fill="#eceff6"/><rect x="220.4" y="339.7" width="8.5" height="8.5" fill="#e4ebf5"/><rect x="228.9" y="339.7" width="8.5" height="8.5" fill="#eef2f8"/><rect x="237.4" y="339.7" width="8.5" height="8.5" fill="#e9eef6"/><rect x="245.9" y="339.7" width="8.5" height="8.5" fill="#f8fafc"/><rect x="254.4" y="339.7" width="8.1" height="8.5" fill="#ffffff"/><rect x="138" y="348.2" width="5.9" height="8.5" fill="#fdfefe"/><rect x="143.9" y="348.2" width="25.5" height="8.5" fill="#fdfdfe"/><rect x="169.4" y="348.2" width="8.5" height="8.5" fill="#fdfefe"/><rect x="177.9" y="348.2" width="17" height="8.5" fill="#fdfdfe"/><rect x="194.9" y="348.2" width="67.6" height="8.5" fill="#fdfefe"/><rect x="138" y="356.7" width="5.9" height="8.5" fill="#ffffff"/><rect x="143.9" y="356.7" width="8.5" height="8.5" fill="#dde3f0"/><rect x="152.4" y="356.7" width="8.5" height="8.5" fill="#e5eaf4"/><rect x="160.9" y="356.7" width="8.5" height="8.5" fill="#d0daec"/><rect x="169.4" y="356.7" width="8.5" height="8.5" fill="#dde3f0"/><rect x="177.9" y="356.7" width="8.5" height="8.5" fill="#cbd5e9"/><rect x="186.4" y="356.7" width="8.5" height="8.5" fill="#d6e0f0"/><rect x="194.9" y="356.7" width="8.5" height="8.5" fill="#d8e0ee"/><rect x="203.4" y="356.7" width="8.5" height="8.5" fill="#d7e0f0"/><rect x="211.9" y="356.7" width="8.5" height="8.5" fill="#eef1f8"/><rect x="220.4" y="356.7" width="8.5" height="8.5" fill="#e5eaf4"/><rect x="228.9" y="356.7" width="8.5" height="8.5" fill="#e6ecf6"/><rect x="237.4" y="356.7" width="25.1" height="8.5" fill="#ffffff"/><rect x="138" y="365.2" width="124.5" height="8.5" fill="#fbfcfd"/><rect x="138" y="373.7" width="5.9" height="8.5" fill="#f6f8fb"/><rect x="143.9" y="373.7" width="8.5" height="8.5" fill="#dde4f1"/><rect x="152.4" y="373.7" width="8.5" height="8.5" fill="#dfe6f1"/><rect x="160.9" y="373.7" width="8.5" height="8.5" fill="#e7ecf5"/><rect x="169.4" y="373.7" width="8.5" height="8.5" fill="#dee5f1"/><rect x="177.9" y="373.7" width="8.5" height="8.5" fill="#dde3f0"/><rect x="186.4" y="373.7" width="8.5" height="8.5" fill="#e0e8f3"/><rect x="194.9" y="373.7" width="8.5" height="8.5" fill="#e5eaf4"/><rect x="203.4" y="373.7" width="8.5" height="8.5" fill="#eaeff6"/><rect x="211.9" y="373.7" width="8.5" height="8.5" fill="#dbe2f0"/><rect x="220.4" y="373.7" width="8.5" height="8.5" fill="#dee5f2"/><rect x="228.9" y="373.7" width="33.6" height="8.5" fill="#f6f8fb"/><rect x="138" y="382.2" width="5.9" height="8.5" fill="#f6f8fb"/><rect x="143.9" y="382.2" width="8.5" height="8.5" fill="#e1e7f2"/><rect x="152.4" y="382.2" width="8.5" height="8.5" fill="#e5ebf4"/><rect x="160.9" y="382.2" width="8.5" height="8.5" fill="#eaeff6"/><rect x="169.4" y="382.2" width="8.5" height="8.5" fill="#e9edf5"/><rect x="177.9" y="382.2" width="8.5" height="8.5" fill="#e5eaf4"/><rect x="186.4" y="382.2" width="8.5" height="8.5" fill="#eaeff6"/><rect x="194.9" y="382.2" width="8.5" height="8.5" fill="#e9eef6"/><rect x="203.4" y="382.2" width="8.5" height="8.5" fill="#eef2f8"/><rect x="211.9" y="382.2" width="8.5" height="8.5" fill="#e3e8f3"/><rect x="220.4" y="382.2" width="8.5" height="8.5" fill="#e6ecf5"/><rect x="228.9" y="382.2" width="33.6" height="8.5" fill="#f6f8fb"/><rect x="138" y="390.7" width="124.5" height="8.5" fill="#fcfcfd"/><rect x="138" y="399.2" width="5.9" height="8.5" fill="#ffffff"/><rect x="143.9" y="399.2" width="8.5" height="8.5" fill="#e4e8f3"/><rect x="152.4" y="399.2" width="8.5" height="8.5" fill="#e1e7f3"/><rect x="160.9" y="399.2" width="8.5" height="8.5" fill="#eff2f7"/><rect x="169.4" y="399.2" width="8.5" height="8.5" fill="#cfd8eb"/><rect x="177.9" y="399.2" width="8.5" height="8.5" fill="#d4ddee"/><rect x="186.4" y="399.2" width="8.5" height="8.5" fill="#dae2ef"/><rect x="194.9" y="399.2" width="8.5" height="8.5" fill="#dce3f1"/><rect x="203.4" y="399.2" width="8.5" height="8.5" fill="#dfe6f2"/><rect x="211.9" y="399.2" width="8.5" height="8.5" fill="#eff1f7"/><rect x="220.4" y="399.2" width="8.5" height="8.5" fill="#e9eff7"/><rect x="228.9" y="399.2" width="8.5" height="8.5" fill="#e3e8f3"/><rect x="237.4" y="399.2" width="8.5" height="8.5" fill="#eef2f8"/><rect x="245.9" y="399.2" width="8.5" height="8.5" fill="#d1dbed"/><rect x="254.4" y="399.2" width="8.1" height="8.5" fill="#ffffff"/><rect x="138" y="407.7" width="124.5" height="8.5" fill="#fdfdfe"/><rect x="138" y="416.2" width="5.9" height="8.5" fill="#ffffff"/><rect x="143.9" y="416.2" width="8.5" height="8.5" fill="#ebeff6"/><rect x="152.4" y="416.2" width="8.5" height="8.5" fill="#e5e9f3"/><rect x="160.9" y="416.2" width="8.5" height="8.5" fill="#e4eaf4"/><rect x="169.4" y="416.2" width="8.5" height="8.5" fill="#edf1f8"/><rect x="177.9" y="416.2" width="8.5" height="8.5" fill="#f2f5fa"/><rect x="186.4" y="416.2" width="8.5" height="8.5" fill="#ecf0f7"/><rect x="194.9" y="416.2" width="8.5" height="8.5" fill="#ebeff7"/><rect x="203.4" y="416.2" width="8.5" height="8.5" fill="#e8ebf4"/><rect x="211.9" y="416.2" width="8.5" height="8.5" fill="#dae2f0"/><rect x="220.4" y="416.2" width="8.5" height="8.5" fill="#e2e9f4"/><rect x="228.9" y="416.2" width="8.5" height="8.5" fill="#dbe2f0"/><rect x="237.4" y="416.2" width="25.1" height="8.5" fill="#ffffff"/><rect x="138" y="424.7" width="5.9" height="5.5" fill="#ffffff"/><rect x="143.9" y="424.7" width="8.5" height="5.5" fill="#f4f6fa"/><rect x="152.4" y="424.7" width="8.5" height="5.5" fill="#f5f7fb"/><rect x="160.9" y="424.7" width="8.5" height="5.5" fill="#f4f7fb"/><rect x="169.4" y="424.7" width="8.5" height="5.5" fill="#f8f9fc"/><rect x="177.9" y="424.7" width="8.5" height="5.5" fill="#fafbfd"/><rect x="186.4" y="424.7" width="17" height="5.5" fill="#f6f8fb"/><rect x="203.4" y="424.7" width="8.5" height="5.5" fill="#f5f7fa"/><rect x="211.9" y="424.7" width="8.5" height="5.5" fill="#f1f4fa"/><rect x="220.4" y="424.7" width="8.5" height="5.5" fill="#f4f6fb"/><rect x="228.9" y="424.7" width="8.5" height="5.5" fill="#edf1f8"/><rect x="237.4" y="424.7" width="25.1" height="5.5" fill="#ffffff"/><rect x="376" y="120.5" width="5.9" height="6.7" fill="#e7f4fa"/><rect x="381.9" y="120.5" width="8.5" height="6.7" fill="#e1eff7"/><rect x="390.4" y="120.5" width="8.5" height="6.7" fill="#e0eff8"/><rect x="398.9" y="120.5" width="8.5" height="6.7" fill="#e4f1f8"/><rect x="407.4" y="120.5" width="8.5" height="6.7" fill="#dfedf7"/><rect x="415.9" y="120.5" width="8.5" height="6.7" fill="#e1eff7"/><rect x="424.4" y="120.5" width="8.5" height="6.7" fill="#e0eef7"/><rect x="432.9" y="120.5" width="7.1" height="6.7" fill="#e4f2f9"/><rect x="376" y="127.2" width="5.9" height="8.5" fill="#e7f4fa"/><rect x="381.9" y="127.2" width="8.5" height="8.5" fill="#d5e4f1"/><rect x="390.4" y="127.2" width="8.5" height="8.5" fill="#c2d6eb"/><rect x="398.9" y="127.2" width="8.5" height="8.5" fill="#c4d6ea"/><rect x="407.4" y="127.2" width="8.5" height="8.5" fill="#c2d5ea"/><rect x="415.9" y="127.2" width="8.5" height="8.5" fill="#c7d9ec"/><rect x="424.4" y="127.2" width="8.5" height="8.5" fill="#cbdcee"/><rect x="432.9" y="127.2" width="7.1" height="8.5" fill="#deedf7"/><rect x="376" y="135.7" width="64" height="8.5" fill="#f4f9fc"/><rect x="376" y="144.2" width="5.9" height="8.5" fill="#ffffff"/><rect x="381.9" y="144.2" width="8.5" height="8.5" fill="#e1e6f1"/><rect x="390.4" y="144.2" width="8.5" height="8.5" fill="#d7e1f0"/><rect x="398.9" y="144.2" width="8.5" height="8.5" fill="#d6deed"/><rect x="407.4" y="144.2" width="8.5" height="8.5" fill="#d6deee"/><rect x="415.9" y="144.2" width="8.5" height="8.5" fill="#eaeff7"/><rect x="424.4" y="144.2" width="15.6" height="8.5" fill="#ffffff"/><rect x="376" y="152.7" width="5.9" height="8.5" fill="#fdfdfe"/><rect x="381.9" y="152.7" width="8.5" height="8.5" fill="#f6f7fa"/><rect x="390.4" y="152.7" width="8.5" height="8.5" fill="#f6f8fb"/><rect x="398.9" y="152.7" width="8.5" height="8.5" fill="#f7f8fb"/><rect x="407.4" y="152.7" width="8.5" height="8.5" fill="#f8f9fc"/><rect x="415.9" y="152.7" width="8.5" height="8.5" fill="#fbfcfd"/><rect x="424.4" y="152.7" width="15.6" height="8.5" fill="#fdfdfe"/><rect x="376" y="161.2" width="5.9" height="8.5" fill="#ffffff"/><rect x="381.9" y="161.2" width="8.5" height="8.5" fill="#f6f8fb"/><rect x="390.4" y="161.2" width="8.5" height="8.5" fill="#eff3f9"/><rect x="398.9" y="161.2" width="8.5" height="8.5" fill="#f3f5fa"/><rect x="407.4" y="161.2" width="32.6" height="8.5" fill="#ffffff"/><rect x="376" y="169.7" width="5.9" height="8.5" fill="#ffffff"/><rect x="381.9" y="169.7" width="8.5" height="8.5" fill="#e5e8f2"/><rect x="390.4" y="169.7" width="8.5" height="8.5" fill="#d8e2f0"/><rect x="398.9" y="169.7" width="8.5" height="8.5" fill="#dbe2f0"/><rect x="407.4" y="169.7" width="32.6" height="8.5" fill="#ffffff"/><rect x="376" y="178.2" width="64" height="8.5" fill="#fdfefe"/><rect x="376" y="186.7" width="5.9" height="8.5" fill="#ffffff"/><rect x="381.9" y="186.7" width="8.5" height="8.5" fill="#dce2ef"/><rect x="390.4" y="186.7" width="8.5" height="8.5" fill="#cedaed"/><rect x="398.9" y="186.7" width="8.5" height="8.5" fill="#dee4f0"/><rect x="407.4" y="186.7" width="8.5" height="8.5" fill="#d4dded"/><rect x="415.9" y="186.7" width="8.5" height="8.5" fill="#dde6f4"/><rect x="424.4" y="186.7" width="15.6" height="8.5" fill="#ffffff"/><rect x="376" y="195.2" width="5.9" height="8.5" fill="#fdfefe"/><rect x="381.9" y="195.2" width="8.5" height="8.5" fill="#f9fafc"/><rect x="390.4" y="195.2" width="8.5" height="8.5" fill="#f7f9fc"/><rect x="398.9" y="195.2" width="8.5" height="8.5" fill="#fcfcfd"/><rect x="407.4" y="195.2" width="8.5" height="8.5" fill="#f8f9fc"/><rect x="415.9" y="195.2" width="8.5" height="8.5" fill="#f8fafc"/><rect x="424.4" y="195.2" width="15.6" height="8.5" fill="#fdfefe"/><rect x="376" y="203.7" width="5.9" height="8.5" fill="#ffffff"/><rect x="381.9" y="203.7" width="8.5" height="8.5" fill="#f5f6fa"/><rect x="390.4" y="203.7" width="8.5" height="8.5" fill="#f1f5fa"/><rect x="398.9" y="203.7" width="8.5" height="8.5" fill="#f2f5f9"/><rect x="407.4" y="203.7" width="8.5" height="8.5" fill="#edf0f7"/><rect x="415.9" y="203.7" width="8.5" height="8.5" fill="#f1f5fa"/><rect x="424.4" y="203.7" width="15.6" height="8.5" fill="#ffffff"/><rect x="376" y="212.2" width="5.9" height="8.5" fill="#ffffff"/><rect x="381.9" y="212.2" width="8.5" height="8.5" fill="#e7eaf3"/><rect x="390.4" y="212.2" width="8.5" height="8.5" fill="#e6edf6"/><rect x="398.9" y="212.2" width="8.5" height="8.5" fill="#e4e9f3"/><rect x="407.4" y="212.2" width="8.5" height="8.5" fill="#dde4f1"/><rect x="415.9" y="212.2" width="8.5" height="8.5" fill="#eaeff7"/><rect x="424.4" y="212.2" width="15.6" height="8.5" fill="#ffffff"/><rect x="376" y="220.7" width="64" height="8.5" fill="#fdfdfe"/><rect x="376" y="229.2" width="5.9" height="8.5" fill="#ffffff"/><rect x="381.9" y="229.2" width="8.5" height="8.5" fill="#e6eaf4"/><rect x="390.4" y="229.2" width="8.5" height="8.5" fill="#d9e1f0"/><rect x="398.9" y="229.2" width="8.5" height="8.5" fill="#d1dbec"/><rect x="407.4" y="229.2" width="32.6" height="8.5" fill="#ffffff"/><rect x="376" y="237.7" width="64" height="8.5" fill="#fdfdfe"/><rect x="376" y="246.2" width="5.9" height="8.5" fill="#ffffff"/><rect x="381.9" y="246.2" width="8.5" height="8.5" fill="#f1f3f8"/><rect x="390.4" y="246.2" width="8.5" height="8.5" fill="#e7edf6"/><rect x="398.9" y="246.2" width="8.5" height="8.5" fill="#eaeef6"/><rect x="407.4" y="246.2" width="8.5" height="8.5" fill="#ebeff6"/><rect x="415.9" y="246.2" width="8.5" height="8.5" fill="#edf2f9"/><rect x="424.4" y="246.2" width="15.6" height="8.5" fill="#ffffff"/><rect x="376" y="254.7" width="5.9" height="8.5" fill="#ffffff"/><rect x="381.9" y="254.7" width="8.5" height="8.5" fill="#eef0f6"/><rect x="390.4" y="254.7" width="8.5" height="8.5" fill="#e2e9f4"/><rect x="398.9" y="254.7" width="8.5" height="8.5" fill="#e5e9f4"/><rect x="407.4" y="254.7" width="8.5" height="8.5" fill="#e3e8f3"/><rect x="415.9" y="254.7" width="8.5" height="8.5" fill="#e6edf7"/><rect x="424.4" y="254.7" width="15.6" height="8.5" fill="#ffffff"/><rect x="376" y="263.2" width="64" height="8.5" fill="#fdfefe"/><rect x="376" y="271.7" width="5.9" height="8.5" fill="#ffffff"/><rect x="381.9" y="271.7" width="8.5" height="8.5" fill="#d7ddec"/><rect x="390.4" y="271.7" width="8.5" height="8.5" fill="#c9d6eb"/><rect x="398.9" y="271.7" width="8.5" height="8.5" fill="#d3dbeb"/><rect x="407.4" y="271.7" width="8.5" height="8.5" fill="#ccd7eb"/><rect x="415.9" y="271.7" width="24.1" height="8.5" fill="#ffffff"/><rect x="376" y="280.2" width="64" height="8.5" fill="#fdfefe"/><rect x="376" y="288.7" width="5.9" height="8.5" fill="#ffffff"/><rect x="381.9" y="288.7" width="8.5" height="8.5" fill="#edf0f7"/><rect x="390.4" y="288.7" width="8.5" height="8.5" fill="#eaeff7"/><rect x="398.9" y="288.7" width="8.5" height="8.5" fill="#e5eaf4"/><rect x="407.4" y="288.7" width="8.5" height="8.5" fill="#f0f3f9"/><rect x="415.9" y="288.7" width="24.1" height="8.5" fill="#ffffff"/><rect x="376" y="297.2" width="5.9" height="8.5" fill="#ffffff"/><rect x="381.9" y="297.2" width="8.5" height="8.5" fill="#eceff6"/><rect x="390.4" y="297.2" width="8.5" height="8.5" fill="#e8edf6"/><rect x="398.9" y="297.2" width="8.5" height="8.5" fill="#e3e8f3"/><rect x="407.4" y="297.2" width="8.5" height="8.5" fill="#eff2f8"/><rect x="415.9" y="297.2" width="24.1" height="8.5" fill="#ffffff"/><rect x="376" y="305.7" width="64" height="8.5" fill="#fdfdfe"/><rect x="376" y="314.2" width="5.9" height="8.5" fill="#ffffff"/><rect x="381.9" y="314.2" width="8.5" height="8.5" fill="#e3e6f1"/><rect x="390.4" y="314.2" width="8.5" height="8.5" fill="#c8d5ea"/><rect x="398.9" y="314.2" width="8.5" height="8.5" fill="#dde2ef"/><rect x="407.4" y="314.2" width="8.5" height="8.5" fill="#d9e3f2"/><rect x="415.9" y="314.2" width="24.1" height="8.5" fill="#ffffff"/><rect x="376" y="322.7" width="64" height="8.5" fill="#fdfdfe"/><rect x="376" y="331.2" width="5.9" height="8.5" fill="#ffffff"/><rect x="381.9" y="331.2" width="8.5" height="8.5" fill="#e7ebf4"/><rect x="390.4" y="331.2" width="8.5" height="8.5" fill="#e5ecf5"/><rect x="398.9" y="331.2" width="8.5" height="8.5" fill="#e4e9f3"/><rect x="407.4" y="331.2" width="8.5" height="8.5" fill="#e7ecf5"/><rect x="415.9" y="331.2" width="8.5" height="8.5" fill="#f6f8fc"/><rect x="424.4" y="331.2" width="15.6" height="8.5" fill="#ffffff"/><rect x="376" y="339.7" width="5.9" height="8.5" fill="#ffffff"/><rect x="381.9" y="339.7" width="8.5" height="8.5" fill="#eaedf5"/><rect x="390.4" y="339.7" width="8.5" height="8.5" fill="#f1f5fa"/><rect x="398.9" y="339.7" width="8.5" height="8.5" fill="#edf0f7"/><rect x="407.4" y="339.7" width="8.5" height="8.5" fill="#ebeff7"/><rect x="415.9" y="339.7" width="8.5" height="8.5" fill="#f6f8fb"/><rect x="424.4" y="339.7" width="15.6" height="8.5" fill="#ffffff"/><rect x="376" y="348.2" width="14.4" height="8.5" fill="#fdfefe"/><rect x="390.4" y="348.2" width="17" height="8.5" fill="#fdfdfe"/><rect x="407.4" y="348.2" width="8.5" height="8.5" fill="#fdfefe"/><rect x="415.9" y="348.2" width="8.5" height="8.5" fill="#fdfdfe"/><rect x="424.4" y="348.2" width="15.6" height="8.5" fill="#fdfefe"/><rect x="376" y="356.7" width="5.9" height="8.5" fill="#ffffff"/><rect x="381.9" y="356.7" width="8.5" height="8.5" fill="#e0e4f0"/><rect x="390.4" y="356.7" width="8.5" height="8.5" fill="#cedaed"/><rect x="398.9" y="356.7" width="8.5" height="8.5" fill="#d1daec"/><rect x="407.4" y="356.7" width="8.5" height="8.5" fill="#dce2ef"/><rect x="415.9" y="356.7" width="8.5" height="8.5" fill="#d8e2f1"/><rect x="424.4" y="356.7" width="15.6" height="8.5" fill="#ffffff"/><rect x="376" y="365.2" width="64" height="8.5" fill="#fbfcfd"/><rect x="376" y="373.7" width="5.9" height="8.5" fill="#f6f8fb"/><rect x="381.9" y="373.7" width="8.5" height="8.5" fill="#dfe5f0"/><rect x="390.4" y="373.7" width="8.5" height="8.5" fill="#dbe3f1"/><rect x="398.9" y="373.7" width="8.5" height="8.5" fill="#e8edf5"/><rect x="407.4" y="373.7" width="32.6" height="8.5" fill="#f6f8fb"/><rect x="376" y="382.2" width="5.9" height="8.5" fill="#f6f8fb"/><rect x="381.9" y="382.2" width="8.5" height="8.5" fill="#eaeef6"/><rect x="390.4" y="382.2" width="8.5" height="8.5" fill="#e4eaf4"/><rect x="398.9" y="382.2" width="8.5" height="8.5" fill="#ebf0f7"/><rect x="407.4" y="382.2" width="32.6" height="8.5" fill="#f6f8fb"/><rect x="376" y="390.7" width="64" height="8.5" fill="#fcfcfd"/><rect x="376" y="399.2" width="5.9" height="8.5" fill="#ffffff"/><rect x="381.9" y="399.2" width="8.5" height="8.5" fill="#e0e4f0"/><rect x="390.4" y="399.2" width="8.5" height="8.5" fill="#e1e9f4"/><rect x="398.9" y="399.2" width="8.5" height="8.5" fill="#d1d9ea"/><rect x="407.4" y="399.2" width="8.5" height="8.5" fill="#cdd6ea"/><rect x="415.9" y="399.2" width="8.5" height="8.5" fill="#dce6f3"/><rect x="424.4" y="399.2" width="15.6" height="8.5" fill="#ffffff"/><rect x="376" y="407.7" width="64" height="8.5" fill="#fdfdfe"/><rect x="376" y="416.2" width="5.9" height="8.5" fill="#ffffff"/><rect x="381.9" y="416.2" width="8.5" height="8.5" fill="#f1f4f9"/><rect x="390.4" y="416.2" width="8.5" height="8.5" fill="#e1e7f3"/><rect x="398.9" y="416.2" width="8.5" height="8.5" fill="#e1e8f2"/><rect x="407.4" y="416.2" width="8.5" height="8.5" fill="#dee5f1"/><rect x="415.9" y="416.2" width="8.5" height="8.5" fill="#eaeff7"/><rect x="424.4" y="416.2" width="15.6" height="8.5" fill="#ffffff"/><rect x="376" y="424.7" width="5.9" height="5.5" fill="#ffffff"/><rect x="381.9" y="424.7" width="8.5" height="5.5" fill="#f7f8fb"/><rect x="390.4" y="424.7" width="8.5" height="5.5" fill="#f0f3f9"/><rect x="398.9" y="424.7" width="8.5" height="5.5" fill="#eef1f8"/><rect x="407.4" y="424.7" width="8.5" height="5.5" fill="#eef2f8"/><rect x="415.9" y="424.7" width="8.5" height="5.5" fill="#fafbfd"/><rect x="424.4" y="424.7" width="15.6" height="5.5" fill="#ffffff"/><rect x="476" y="120.5" width="7.9" height="6.7" fill="#e2f0f8"/><rect x="483.9" y="120.5" width="8.5" height="6.7" fill="#e2f0f7"/><rect x="492.4" y="120.5" width="8.5" height="6.7" fill="#deecf6"/><rect x="500.9" y="120.5" width="8.5" height="6.7" fill="#deedf6"/><rect x="509.4" y="120.5" width="17" height="6.7" fill="#deecf6"/><rect x="526.4" y="120.5" width="2.6" height="6.7" fill="#e6f4fa"/><rect x="476" y="127.2" width="7.9" height="8.5" fill="#c8daec"/><rect x="483.9" y="127.2" width="8.5" height="8.5" fill="#cbdcee"/><rect x="492.4" y="127.2" width="8.5" height="8.5" fill="#cadaec"/><rect x="500.9" y="127.2" width="8.5" height="8.5" fill="#c4d7ea"/><rect x="509.4" y="127.2" width="8.5" height="8.5" fill="#c8daec"/><rect x="517.9" y="127.2" width="8.5" height="8.5" fill="#bcd1e8"/><rect x="526.4" y="127.2" width="2.6" height="8.5" fill="#e5f3fa"/><rect x="476" y="135.7" width="53" height="8.5" fill="#f4f9fc"/><rect x="476" y="144.2" width="7.9" height="8.5" fill="#e5e9f2"/><rect x="483.9" y="144.2" width="8.5" height="8.5" fill="#dae2f0"/><rect x="492.4" y="144.2" width="8.5" height="8.5" fill="#d2dbec"/><rect x="500.9" y="144.2" width="8.5" height="8.5" fill="#d5deee"/><rect x="509.4" y="144.2" width="8.5" height="8.5" fill="#cdd8eb"/><rect x="517.9" y="144.2" width="8.5" height="8.5" fill="#dae3f1"/><rect x="526.4" y="144.2" width="2.6" height="8.5" fill="#feffff"/><rect x="476" y="152.7" width="7.9" height="8.5" fill="#fbfbfd"/><rect x="483.9" y="152.7" width="8.5" height="8.5" fill="#f8f9fc"/><rect x="492.4" y="152.7" width="8.5" height="8.5" fill="#f7f9fb"/><rect x="500.9" y="152.7" width="8.5" height="8.5" fill="#fbfcfd"/><rect x="509.4" y="152.7" width="8.5" height="8.5" fill="#f3f5fa"/><rect x="517.9" y="152.7" width="8.5" height="8.5" fill="#f8f9fc"/><rect x="526.4" y="152.7" width="2.6" height="8.5" fill="#fdfdfe"/><rect x="476" y="161.2" width="7.9" height="8.5" fill="#f5f7fa"/><rect x="483.9" y="161.2" width="8.5" height="8.5" fill="#f0f2f8"/><rect x="492.4" y="161.2" width="8.5" height="8.5" fill="#eff2f9"/><rect x="500.9" y="161.2" width="8.5" height="8.5" fill="#eef1f8"/><rect x="509.4" y="161.2" width="8.5" height="8.5" fill="#f2f5fa"/><rect x="517.9" y="161.2" width="8.5" height="8.5" fill="#f1f4f9"/><rect x="526.4" y="161.2" width="2.6" height="8.5" fill="#fefeff"/><rect x="476" y="169.7" width="7.9" height="8.5" fill="#e4e8f3"/><rect x="483.9" y="169.7" width="8.5" height="8.5" fill="#d8e0ef"/><rect x="492.4" y="169.7" width="8.5" height="8.5" fill="#e0e6f2"/><rect x="500.9" y="169.7" width="8.5" height="8.5" fill="#d5dded"/><rect x="509.4" y="169.7" width="8.5" height="8.5" fill="#d9e1f0"/><rect x="517.9" y="169.7" width="8.5" height="8.5" fill="#dde4f1"/><rect x="526.4" y="169.7" width="2.6" height="8.5" fill="#fcfeff"/><rect x="476" y="178.2" width="53" height="8.5" fill="#fdfefe"/><rect x="476" y="186.7" width="7.9" height="8.5" fill="#ffffff"/><rect x="483.9" y="186.7" width="8.5" height="8.5" fill="#e1e5f0"/><rect x="492.4" y="186.7" width="8.5" height="8.5" fill="#c9d6ea"/><rect x="500.9" y="186.7" width="8.5" height="8.5" fill="#d7dfee"/><rect x="509.4" y="186.7" width="8.5" height="8.5" fill="#d4deee"/><rect x="517.9" y="186.7" width="11.1" height="8.5" fill="#ffffff"/><rect x="476" y="195.2" width="7.9" height="8.5" fill="#fdfefe"/><rect x="483.9" y="195.2" width="8.5" height="8.5" fill="#f9fafc"/><rect x="492.4" y="195.2" width="8.5" height="8.5" fill="#fafbfd"/><rect x="500.9" y="195.2" width="8.5" height="8.5" fill="#fafbfc"/><rect x="509.4" y="195.2" width="8.5" height="8.5" fill="#f5f7fb"/><rect x="517.9" y="195.2" width="11.1" height="8.5" fill="#fdfefe"/><rect x="476" y="203.7" width="7.9" height="8.5" fill="#eef1f8"/><rect x="483.9" y="203.7" width="8.5" height="8.5" fill="#eff2f8"/><rect x="492.4" y="203.7" width="8.5" height="8.5" fill="#eef2f8"/><rect x="500.9" y="203.7" width="17" height="8.5" fill="#f0f3f9"/><rect x="517.9" y="203.7" width="8.5" height="8.5" fill="#f2f5fa"/><rect x="526.4" y="203.7" width="2.6" height="8.5" fill="#ffffff"/><rect x="476" y="212.2" width="7.9" height="8.5" fill="#e6eaf4"/><rect x="483.9" y="212.2" width="8.5" height="8.5" fill="#e1e7f2"/><rect x="492.4" y="212.2" width="8.5" height="8.5" fill="#dbe3f1"/><rect x="500.9" y="212.2" width="8.5" height="8.5" fill="#e1e7f2"/><rect x="509.4" y="212.2" width="8.5" height="8.5" fill="#dee5f1"/><rect x="517.9" y="212.2" width="8.5" height="8.5" fill="#e9eff7"/><rect x="526.4" y="212.2" width="2.6" height="8.5" fill="#feffff"/><rect x="476" y="220.7" width="53" height="8.5" fill="#fdfdfe"/><rect x="476" y="229.2" width="7.9" height="8.5" fill="#eef0f6"/><rect x="483.9" y="229.2" width="8.5" height="8.5" fill="#c6d0e7"/><rect x="492.4" y="229.2" width="8.5" height="8.5" fill="#d5e0f0"/><rect x="500.9" y="229.2" width="8.5" height="8.5" fill="#d4dded"/><rect x="509.4" y="229.2" width="8.5" height="8.5" fill="#d7deee"/><rect x="517.9" y="229.2" width="8.5" height="8.5" fill="#ecf1f8"/><rect x="526.4" y="229.2" width="2.6" height="8.5" fill="#ffffff"/><rect x="476" y="237.7" width="53" height="8.5" fill="#fdfdfe"/><rect x="476" y="246.2" width="7.9" height="8.5" fill="#ffffff"/><rect x="483.9" y="246.2" width="8.5" height="8.5" fill="#eef1f7"/><rect x="492.4" y="246.2" width="8.5" height="8.5" fill="#ecf1f8"/><rect x="500.9" y="246.2" width="8.5" height="8.5" fill="#ebeff6"/><rect x="509.4" y="246.2" width="8.5" height="8.5" fill="#f0f3f9"/><rect x="517.9" y="246.2" width="11.1" height="8.5" fill="#ffffff"/><rect x="476" y="254.7" width="7.9" height="8.5" fill="#ffffff"/><rect x="483.9" y="254.7" width="8.5" height="8.5" fill="#e8eaf4"/><rect x="492.4" y="254.7" width="8.5" height="8.5" fill="#e5ecf6"/><rect x="500.9" y="254.7" width="8.5" height="8.5" fill="#e5eaf4"/><rect x="509.4" y="254.7" width="8.5" height="8.5" fill="#e8edf6"/><rect x="517.9" y="254.7" width="11.1" height="8.5" fill="#ffffff"/><rect x="476" y="263.2" width="53" height="8.5" fill="#fdfefe"/><rect x="476" y="271.7" width="7.9" height="8.5" fill="#dbe0ee"/><rect x="483.9" y="271.7" width="8.5" height="8.5" fill="#ccd8eb"/><rect x="492.4" y="271.7" width="8.5" height="8.5" fill="#d3dded"/><rect x="500.9" y="271.7" width="8.5" height="8.5" fill="#d3daeb"/><rect x="509.4" y="271.7" width="8.5" height="8.5" fill="#c4d1e7"/><rect x="517.9" y="271.7" width="8.5" height="8.5" fill="#c3d1e8"/><rect x="526.4" y="271.7" width="2.6" height="8.5" fill="#fdffff"/><rect x="476" y="280.2" width="16.4" height="8.5" fill="#fdfefe"/><rect x="492.4" y="280.2" width="8.5" height="8.5" fill="#fdfdfe"/><rect x="500.9" y="280.2" width="8.5" height="8.5" fill="#fdfefe"/><rect x="509.4" y="280.2" width="8.5" height="8.5" fill="#fdfdfe"/><rect x="517.9" y="280.2" width="11.1" height="8.5" fill="#fdfefe"/><rect x="476" y="288.7" width="7.9" height="8.5" fill="#ebeef6"/><rect x="483.9" y="288.7" width="8.5" height="8.5" fill="#eaeef6"/><rect x="492.4" y="288.7" width="8.5" height="8.5" fill="#f1f4f9"/><rect x="500.9" y="288.7" width="8.5" height="8.5" fill="#e9eef6"/><rect x="509.4" y="288.7" width="8.5" height="8.5" fill="#e6eaf4"/><rect x="517.9" y="288.7" width="8.5" height="8.5" fill="#eaeff7"/><rect x="526.4" y="288.7" width="2.6" height="8.5" fill="#fdfeff"/><rect x="476" y="297.2" width="7.9" height="8.5" fill="#eaeef6"/><rect x="483.9" y="297.2" width="8.5" height="8.5" fill="#e6ebf5"/><rect x="492.4" y="297.2" width="8.5" height="8.5" fill="#ebeef6"/><rect x="500.9" y="297.2" width="8.5" height="8.5" fill="#dde5f2"/><rect x="509.4" y="297.2" width="8.5" height="8.5" fill="#e1e7f3"/><rect x="517.9" y="297.2" width="8.5" height="8.5" fill="#edf0f7"/><rect x="526.4" y="297.2" width="2.6" height="8.5" fill="#fdfeff"/><rect x="476" y="305.7" width="53" height="8.5" fill="#fdfdfe"/><rect x="476" y="314.2" width="7.9" height="8.5" fill="#dae1ef"/><rect x="483.9" y="314.2" width="8.5" height="8.5" fill="#e2e6f2"/><rect x="492.4" y="314.2" width="8.5" height="8.5" fill="#cbd5e9"/><rect x="500.9" y="314.2" width="8.5" height="8.5" fill="#ccd7ea"/><rect x="509.4" y="314.2" width="8.5" height="8.5" fill="#d6e0ef"/><rect x="517.9" y="314.2" width="8.5" height="8.5" fill="#d3dbed"/><rect x="526.4" y="314.2" width="2.6" height="8.5" fill="#fbfeff"/><rect x="476" y="322.7" width="53" height="8.5" fill="#fdfdfe"/><rect x="476" y="331.2" width="7.9" height="8.5" fill="#f3f5f9"/><rect x="483.9" y="331.2" width="8.5" height="8.5" fill="#e4e9f4"/><rect x="492.4" y="331.2" width="8.5" height="8.5" fill="#e3e9f4"/><rect x="500.9" y="331.2" width="8.5" height="8.5" fill="#e7edf5"/><rect x="509.4" y="331.2" width="8.5" height="8.5" fill="#e6ebf4"/><rect x="517.9" y="331.2" width="8.5" height="8.5" fill="#e1e7f2"/><rect x="526.4" y="331.2" width="2.6" height="8.5" fill="#fcfdff"/><rect x="476" y="339.7" width="7.9" height="8.5" fill="#f3f5fa"/><rect x="483.9" y="339.7" width="8.5" height="8.5" fill="#e2e9f3"/><rect x="492.4" y="339.7" width="8.5" height="8.5" fill="#e7ebf5"/><rect x="500.9" y="339.7" width="8.5" height="8.5" fill="#e9eef7"/><rect x="509.4" y="339.7" width="8.5" height="8.5" fill="#ecf0f7"/><rect x="517.9" y="339.7" width="8.5" height="8.5" fill="#e6ecf5"/><rect x="526.4" y="339.7" width="2.6" height="8.5" fill="#fdfeff"/><rect x="476" y="348.2" width="16.4" height="8.5" fill="#fdfdfe"/><rect x="492.4" y="348.2" width="17" height="8.5" fill="#fdfefe"/><rect x="509.4" y="348.2" width="8.5" height="8.5" fill="#fdfdfe"/><rect x="517.9" y="348.2" width="11.1" height="8.5" fill="#fdfefe"/><rect x="476" y="356.7" width="7.9" height="8.5" fill="#d0d7e9"/><rect x="483.9" y="356.7" width="8.5" height="8.5" fill="#c9d4e8"/><rect x="492.4" y="356.7" width="8.5" height="8.5" fill="#cbd6eb"/><rect x="500.9" y="356.7" width="8.5" height="8.5" fill="#d4dded"/><rect x="509.4" y="356.7" width="8.5" height="8.5" fill="#c3cfe6"/><rect x="517.9" y="356.7" width="8.5" height="8.5" fill="#c1cfe7"/><rect x="526.4" y="356.7" width="2.6" height="8.5" fill="#fdffff"/><rect x="476" y="365.2" width="53" height="8.5" fill="#fbfcfd"/><rect x="476" y="373.7" width="7.9" height="8.5" fill="#f6f7fa"/><rect x="483.9" y="373.7" width="8.5" height="8.5" fill="#d9e0ef"/><rect x="492.4" y="373.7" width="8.5" height="8.5" fill="#dbe3f0"/><rect x="500.9" y="373.7" width="8.5" height="8.5" fill="#dde4f0"/><rect x="509.4" y="373.7" width="8.5" height="8.5" fill="#d4deed"/><rect x="517.9" y="373.7" width="8.5" height="8.5" fill="#f0f4f9"/><rect x="526.4" y="373.7" width="2.6" height="8.5" fill="#f6f8fb"/><rect x="476" y="382.2" width="7.9" height="8.5" fill="#f5f6fa"/><rect x="483.9" y="382.2" width="17" height="8.5" fill="#e2e8f3"/><rect x="500.9" y="382.2" width="8.5" height="8.5" fill="#e8edf5"/><rect x="509.4" y="382.2" width="8.5" height="8.5" fill="#e1e7f2"/><rect x="517.9" y="382.2" width="8.5" height="8.5" fill="#f2f6fa"/><rect x="526.4" y="382.2" width="2.6" height="8.5" fill="#f6f8fb"/><rect x="476" y="390.7" width="16.4" height="8.5" fill="#fcfcfd"/><rect x="492.4" y="390.7" width="8.5" height="8.5" fill="#fbfcfd"/><rect x="500.9" y="390.7" width="28.1" height="8.5" fill="#fcfcfd"/><rect x="476" y="399.2" width="7.9" height="8.5" fill="#d5dded"/><rect x="483.9" y="399.2" width="8.5" height="8.5" fill="#dae2f0"/><rect x="492.4" y="399.2" width="8.5" height="8.5" fill="#d0daeb"/><rect x="500.9" y="399.2" width="8.5" height="8.5" fill="#cad4e9"/><rect x="509.4" y="399.2" width="8.5" height="8.5" fill="#ccd8eb"/><rect x="517.9" y="399.2" width="8.5" height="8.5" fill="#cad6ea"/><rect x="526.4" y="399.2" width="2.6" height="8.5" fill="#fdfeff"/><rect x="476" y="407.7" width="53" height="8.5" fill="#fdfdfe"/><rect x="476" y="416.2" width="7.9" height="8.5" fill="#e7ebf4"/><rect x="483.9" y="416.2" width="8.5" height="8.5" fill="#dde3f0"/><rect x="492.4" y="416.2" width="8.5" height="8.5" fill="#dbe2f0"/><rect x="500.9" y="416.2" width="8.5" height="8.5" fill="#d9e1f0"/><rect x="509.4" y="416.2" width="8.5" height="8.5" fill="#d8e0f0"/><rect x="517.9" y="416.2" width="8.5" height="8.5" fill="#dfe4f1"/><rect x="526.4" y="416.2" width="2.6" height="8.5" fill="#fbfeff"/><rect x="476" y="424.7" width="7.9" height="5.5" fill="#f8f9fb"/><rect x="483.9" y="424.7" width="8.5" height="5.5" fill="#f2f4fa"/><rect x="492.4" y="424.7" width="8.5" height="5.5" fill="#f0f3f8"/><rect x="500.9" y="424.7" width="17" height="5.5" fill="#eef2f8"/><rect x="517.9" y="424.7" width="8.5" height="5.5" fill="#f4f6fa"/><rect x="526.4" y="424.7" width="2.6" height="5.5" fill="#fdfeff"/><rect x="890" y="120.5" width="27.4" height="6.7" fill="#e7f4fa"/><rect x="917.4" y="120.5" width="8.5" height="6.7" fill="#e4f2f9"/><rect x="925.9" y="120.5" width="8.5" height="6.7" fill="#dfedf6"/><rect x="934.4" y="120.5" width="8.5" height="6.7" fill="#e2f0f8"/><rect x="942.9" y="120.5" width="8.5" height="6.7" fill="#e7f4fa"/><rect x="951.4" y="120.5" width="6.6" height="6.7" fill="#e5f2f8"/><rect x="890" y="127.2" width="27.4" height="8.5" fill="#e7f4fa"/><rect x="917.4" y="127.2" width="8.5" height="8.5" fill="#c8daec"/><rect x="925.9" y="127.2" width="8.5" height="8.5" fill="#c5d6ea"/><rect x="934.4" y="127.2" width="8.5" height="8.5" fill="#caddef"/><rect x="942.9" y="127.2" width="8.5" height="8.5" fill="#e7f4fa"/><rect x="951.4" y="127.2" width="6.6" height="8.5" fill="#e5f2f8"/><rect x="890" y="135.7" width="61.4" height="8.5" fill="#f4f9fc"/><rect x="951.4" y="135.7" width="6.6" height="8.5" fill="#f2f7fa"/><rect x="890" y="144.2" width="1.9" height="8.5" fill="#ffffff"/><rect x="891.9" y="144.2" width="8.5" height="8.5" fill="#e8ecf4"/><rect x="900.4" y="144.2" width="8.5" height="8.5" fill="#d7e0f0"/><rect x="908.9" y="144.2" width="8.5" height="8.5" fill="#d9e1ef"/><rect x="917.4" y="144.2" width="8.5" height="8.5" fill="#f6f6fa"/><rect x="925.9" y="144.2" width="8.5" height="8.5" fill="#d2dbec"/><rect x="934.4" y="144.2" width="8.5" height="8.5" fill="#d4dded"/><rect x="942.9" y="144.2" width="8.5" height="8.5" fill="#ced8eb"/><rect x="951.4" y="144.2" width="6.6" height="8.5" fill="#f4f8fb"/><rect x="890" y="152.7" width="1.9" height="8.5" fill="#fdfdfe"/><rect x="891.9" y="152.7" width="8.5" height="8.5" fill="#fbfbfd"/><rect x="900.4" y="152.7" width="8.5" height="8.5" fill="#f2f5f9"/><rect x="908.9" y="152.7" width="8.5" height="8.5" fill="#f7f9fb"/><rect x="917.4" y="152.7" width="8.5" height="8.5" fill="#fafbfc"/><rect x="925.9" y="152.7" width="8.5" height="8.5" fill="#f7f9fc"/><rect x="934.4" y="152.7" width="8.5" height="8.5" fill="#fbfcfd"/><rect x="942.9" y="152.7" width="8.5" height="8.5" fill="#f2f5f9"/><rect x="951.4" y="152.7" width="6.6" height="8.5" fill="#f9fafb"/><rect x="890" y="161.2" width="27.4" height="8.5" fill="#ffffff"/><rect x="917.4" y="161.2" width="17" height="8.5" fill="#f4f6fa"/><rect x="934.4" y="161.2" width="8.5" height="8.5" fill="#f5f8fb"/><rect x="942.9" y="161.2" width="8.5" height="8.5" fill="#ffffff"/><rect x="951.4" y="161.2" width="6.6" height="8.5" fill="#fcfcfc"/><rect x="890" y="169.7" width="27.4" height="8.5" fill="#ffffff"/><rect x="917.4" y="169.7" width="8.5" height="8.5" fill="#dfe5f1"/><rect x="925.9" y="169.7" width="8.5" height="8.5" fill="#e8eaf3"/><rect x="934.4" y="169.7" width="8.5" height="8.5" fill="#e5ecf6"/><rect x="942.9" y="169.7" width="8.5" height="8.5" fill="#ffffff"/><rect x="951.4" y="169.7" width="6.6" height="8.5" fill="#fdfdfd"/><rect x="890" y="178.2" width="61.4" height="8.5" fill="#fdfefe"/><rect x="951.4" y="178.2" width="6.6" height="8.5" fill="#fbfbfc"/><rect x="890" y="186.7" width="27.4" height="8.5" fill="#ffffff"/><rect x="917.4" y="186.7" width="8.5" height="8.5" fill="#e2e8f3"/><rect x="925.9" y="186.7" width="8.5" height="8.5" fill="#d9dfee"/><rect x="934.4" y="186.7" width="8.5" height="8.5" fill="#d8e2f0"/><rect x="942.9" y="186.7" width="8.5" height="8.5" fill="#ffffff"/><rect x="951.4" y="186.7" width="6.6" height="8.5" fill="#fdfdfd"/><rect x="890" y="195.2" width="27.4" height="8.5" fill="#fdfefe"/><rect x="917.4" y="195.2" width="8.5" height="8.5" fill="#fcfcfd"/><rect x="925.9" y="195.2" width="8.5" height="8.5" fill="#f8f9fc"/><rect x="934.4" y="195.2" width="8.5" height="8.5" fill="#f7f9fc"/><rect x="942.9" y="195.2" width="8.5" height="8.5" fill="#fdfefe"/><rect x="951.4" y="195.2" width="6.6" height="8.5" fill="#fbfbfc"/><rect x="890" y="203.7" width="1.9" height="8.5" fill="#ffffff"/><rect x="891.9" y="203.7" width="8.5" height="8.5" fill="#f3f5f9"/><rect x="900.4" y="203.7" width="8.5" height="8.5" fill="#eff3f9"/><rect x="908.9" y="203.7" width="8.5" height="8.5" fill="#f3f6fa"/><rect x="917.4" y="203.7" width="8.5" height="8.5" fill="#fcfcfd"/><rect x="925.9" y="203.7" width="8.5" height="8.5" fill="#eef2f8"/><rect x="934.4" y="203.7" width="8.5" height="8.5" fill="#f1f3f9"/><rect x="942.9" y="203.7" width="8.5" height="8.5" fill="#f0f3f9"/><rect x="951.4" y="203.7" width="6.6" height="8.5" fill="#f9fafc"/><rect x="890" y="212.2" width="1.9" height="8.5" fill="#ffffff"/><rect x="891.9" y="212.2" width="8.5" height="8.5" fill="#e9ecf5"/><rect x="900.4" y="212.2" width="8.5" height="8.5" fill="#dbe3f1"/><rect x="908.9" y="212.2" width="8.5" height="8.5" fill="#ebeff7"/><rect x="917.4" y="212.2" width="8.5" height="8.5" fill="#f5f6f9"/><rect x="925.9" y="212.2" width="8.5" height="8.5" fill="#dae3f1"/><rect x="934.4" y="212.2" width="8.5" height="8.5" fill="#dfe7f2"/><rect x="942.9" y="212.2" width="8.5" height="8.5" fill="#dfe5f1"/><rect x="951.4" y="212.2" width="6.6" height="8.5" fill="#f6f9fb"/><rect x="890" y="220.7" width="61.4" height="8.5" fill="#fdfdfe"/><rect x="951.4" y="220.7" width="6.6" height="8.5" fill="#fbfbfb"/><rect x="890" y="229.2" width="27.4" height="8.5" fill="#ffffff"/><rect x="917.4" y="229.2" width="8.5" height="8.5" fill="#d6dfee"/><rect x="925.9" y="229.2" width="8.5" height="8.5" fill="#d2daeb"/><rect x="934.4" y="229.2" width="8.5" height="8.5" fill="#dde5f2"/><rect x="942.9" y="229.2" width="8.5" height="8.5" fill="#ffffff"/><rect x="951.4" y="229.2" width="6.6" height="8.5" fill="#fdfdfd"/><rect x="890" y="237.7" width="61.4" height="8.5" fill="#fdfdfe"/><rect x="951.4" y="237.7" width="6.6" height="8.5" fill="#fbfbfb"/><rect x="890" y="246.2" width="1.9" height="8.5" fill="#ffffff"/><rect x="891.9" y="246.2" width="8.5" height="8.5" fill="#f3f5fa"/><rect x="900.4" y="246.2" width="8.5" height="8.5" fill="#edf0f7"/><rect x="908.9" y="246.2" width="8.5" height="8.5" fill="#e9eef6"/><rect x="917.4" y="246.2" width="8.5" height="8.5" fill="#fafafc"/><rect x="925.9" y="246.2" width="8.5" height="8.5" fill="#edf1f8"/><rect x="934.4" y="246.2" width="8.5" height="8.5" fill="#eef1f8"/><rect x="942.9" y="246.2" width="8.5" height="8.5" fill="#eff3f9"/><rect x="951.4" y="246.2" width="6.6" height="8.5" fill="#f9fbfc"/><rect x="890" y="254.7" width="1.9" height="8.5" fill="#ffffff"/><rect x="891.9" y="254.7" width="8.5" height="8.5" fill="#f2f4f9"/><rect x="900.4" y="254.7" width="8.5" height="8.5" fill="#e8edf6"/><rect x="908.9" y="254.7" width="8.5" height="8.5" fill="#e3e9f4"/><rect x="917.4" y="254.7" width="8.5" height="8.5" fill="#f6f6fa"/><rect x="925.9" y="254.7" width="8.5" height="8.5" fill="#e5eaf4"/><rect x="934.4" y="254.7" width="8.5" height="8.5" fill="#e6ebf5"/><rect x="942.9" y="254.7" width="8.5" height="8.5" fill="#dde5f1"/><rect x="951.4" y="254.7" width="6.6" height="8.5" fill="#f5f8fb"/><rect x="890" y="263.2" width="61.4" height="8.5" fill="#fdfefe"/><rect x="951.4" y="263.2" width="6.6" height="8.5" fill="#fbfbfc"/><rect x="890" y="271.7" width="27.4" height="8.5" fill="#ffffff"/><rect x="917.4" y="271.7" width="8.5" height="8.5" fill="#d8e0ef"/><rect x="925.9" y="271.7" width="8.5" height="8.5" fill="#c5d0e7"/><rect x="934.4" y="271.7" width="8.5" height="8.5" fill="#dee5f2"/><rect x="942.9" y="271.7" width="8.5" height="8.5" fill="#ffffff"/><rect x="951.4" y="271.7" width="6.6" height="8.5" fill="#fdfdfd"/><rect x="890" y="280.2" width="61.4" height="8.5" fill="#fdfefe"/><rect x="951.4" y="280.2" width="6.6" height="8.5" fill="#fbfbfc"/><rect x="890" y="288.7" width="27.4" height="8.5" fill="#ffffff"/><rect x="917.4" y="288.7" width="8.5" height="8.5" fill="#e8ecf5"/><rect x="925.9" y="288.7" width="8.5" height="8.5" fill="#edeff6"/><rect x="934.4" y="288.7" width="8.5" height="8.5" fill="#ecf1f8"/><rect x="942.9" y="288.7" width="8.5" height="8.5" fill="#ffffff"/><rect x="951.4" y="288.7" width="6.6" height="8.5" fill="#fdfdfd"/><rect x="890" y="297.2" width="27.4" height="8.5" fill="#ffffff"/><rect x="917.4" y="297.2" width="8.5" height="8.5" fill="#e6ebf5"/><rect x="925.9" y="297.2" width="8.5" height="8.5" fill="#ebeef6"/><rect x="934.4" y="297.2" width="8.5" height="8.5" fill="#ecf1f8"/><rect x="942.9" y="297.2" width="8.5" height="8.5" fill="#ffffff"/><rect x="951.4" y="297.2" width="6.6" height="8.5" fill="#fdfdfd"/><rect x="890" y="305.7" width="61.4" height="8.5" fill="#fdfdfe"/><rect x="951.4" y="305.7" width="6.6" height="8.5" fill="#fbfbfb"/><rect x="890" y="314.2" width="27.4" height="8.5" fill="#ffffff"/><rect x="917.4" y="314.2" width="8.5" height="8.5" fill="#f1f3f8"/><rect x="925.9" y="314.2" width="8.5" height="8.5" fill="#d2dced"/><rect x="934.4" y="314.2" width="8.5" height="8.5" fill="#f1f5fb"/><rect x="942.9" y="314.2" width="8.5" height="8.5" fill="#ffffff"/><rect x="951.4" y="314.2" width="6.6" height="8.5" fill="#fdfdfd"/><rect x="890" y="322.7" width="61.4" height="8.5" fill="#fdfdfe"/><rect x="951.4" y="322.7" width="6.6" height="8.5" fill="#fbfbfb"/><rect x="890" y="331.2" width="27.4" height="8.5" fill="#ffffff"/><rect x="917.4" y="331.2" width="8.5" height="8.5" fill="#f3f5f9"/><rect x="925.9" y="331.2" width="8.5" height="8.5" fill="#e5eaf4"/><rect x="934.4" y="331.2" width="8.5" height="8.5" fill="#f6f9fc"/><rect x="942.9" y="331.2" width="8.5" height="8.5" fill="#ffffff"/><rect x="951.4" y="331.2" width="6.6" height="8.5" fill="#fdfdfd"/><rect x="890" y="339.7" width="27.4" height="8.5" fill="#ffffff"/><rect x="917.4" y="339.7" width="8.5" height="8.5" fill="#f7f8fb"/><rect x="925.9" y="339.7" width="8.5" height="8.5" fill="#eaeff7"/><rect x="934.4" y="339.7" width="8.5" height="8.5" fill="#f8fafd"/><rect x="942.9" y="339.7" width="8.5" height="8.5" fill="#ffffff"/><rect x="951.4" y="339.7" width="6.6" height="8.5" fill="#fdfdfd"/><rect x="890" y="348.2" width="27.4" height="8.5" fill="#fdfefe"/><rect x="917.4" y="348.2" width="8.5" height="8.5" fill="#fdfdfe"/><rect x="925.9" y="348.2" width="8.5" height="8.5" fill="#fdfefe"/><rect x="934.4" y="348.2" width="8.5" height="8.5" fill="#fdfdfe"/><rect x="942.9" y="348.2" width="8.5" height="8.5" fill="#fdfefe"/><rect x="951.4" y="348.2" width="6.6" height="8.5" fill="#fbfbfc"/><rect x="890" y="356.7" width="27.4" height="8.5" fill="#ffffff"/><rect x="917.4" y="356.7" width="8.5" height="8.5" fill="#d7dfee"/><rect x="925.9" y="356.7" width="8.5" height="8.5" fill="#e2e7f2"/><rect x="934.4" y="356.7" width="8.5" height="8.5" fill="#d3ddee"/><rect x="942.9" y="356.7" width="8.5" height="8.5" fill="#ffffff"/><rect x="951.4" y="356.7" width="6.6" height="8.5" fill="#fdfdfd"/><rect x="890" y="365.2" width="61.4" height="8.5" fill="#fbfcfd"/><rect x="951.4" y="365.2" width="6.6" height="8.5" fill="#f9fafb"/><rect x="890" y="373.7" width="27.4" height="8.5" fill="#f6f8fb"/><rect x="917.4" y="373.7" width="8.5" height="8.5" fill="#eaeef5"/><rect x="925.9" y="373.7" width="8.5" height="8.5" fill="#dce2ef"/><rect x="934.4" y="373.7" width="8.5" height="8.5" fill="#dee6f2"/><rect x="942.9" y="373.7" width="8.5" height="8.5" fill="#f6f8fb"/><rect x="951.4" y="373.7" width="6.6" height="8.5" fill="#f4f6f9"/><rect x="890" y="382.2" width="27.4" height="8.5" fill="#f6f8fb"/><rect x="917.4" y="382.2" width="8.5" height="8.5" fill="#edf1f7"/><rect x="925.9" y="382.2" width="8.5" height="8.5" fill="#e0e6f1"/><rect x="934.4" y="382.2" width="8.5" height="8.5" fill="#e7edf6"/><rect x="942.9" y="382.2" width="8.5" height="8.5" fill="#f6f8fb"/><rect x="951.4" y="382.2" width="6.6" height="8.5" fill="#f4f6f9"/><rect x="890" y="390.7" width="61.4" height="8.5" fill="#fcfcfd"/><rect x="951.4" y="390.7" width="6.6" height="8.5" fill="#f9fafb"/><rect x="890" y="399.2" width="27.4" height="8.5" fill="#ffffff"/><rect x="917.4" y="399.2" width="8.5" height="8.5" fill="#eaedf4"/><rect x="925.9" y="399.2" width="8.5" height="8.5" fill="#ccd7ea"/><rect x="934.4" y="399.2" width="8.5" height="8.5" fill="#f1f5fb"/><rect x="942.9" y="399.2" width="8.5" height="8.5" fill="#ffffff"/><rect x="951.4" y="399.2" width="6.6" height="8.5" fill="#fdfdfd"/><rect x="890" y="407.7" width="61.4" height="8.5" fill="#fdfdfe"/><rect x="951.4" y="407.7" width="6.6" height="8.5" fill="#fbfbfb"/><rect x="890" y="416.2" width="27.4" height="8.5" fill="#ffffff"/><rect x="917.4" y="416.2" width="8.5" height="8.5" fill="#e5eaf4"/><rect x="925.9" y="416.2" width="8.5" height="8.5" fill="#dfe5f1"/><rect x="934.4" y="416.2" width="8.5" height="8.5" fill="#e8eef6"/><rect x="942.9" y="416.2" width="8.5" height="8.5" fill="#ffffff"/><rect x="951.4" y="416.2" width="6.6" height="8.5" fill="#fdfdfd"/><rect x="890" y="424.7" width="27.4" height="8.5" fill="#f2f2f2"/><rect x="917.4" y="424.7" width="8.5" height="8.5" fill="#e2e6ec"/><rect x="925.9" y="424.7" width="8.5" height="8.5" fill="#e1e4eb"/><rect x="934.4" y="424.7" width="8.5" height="8.5" fill="#ebedf0"/><rect x="942.9" y="424.7" width="8.5" height="8.5" fill="#f2f2f2"/><rect x="951.4" y="424.7" width="6.6" height="8.5" fill="#f0f0f1"/><rect x="890" y="433.2" width="61.4" height="1.2" fill="#f9fafa"/><rect x="951.4" y="433.2" width="6.6" height="1.2" fill="#f9f9fa"/></svg>
</div>
<div class="pt" style="left:128.9px">共 <span style="font-size:8.1px">48</span> 条</div>
<div class="inp" style="left:166.2px;top:454.6px;width:60.6px;height:14.6px;border-radius:2px"><div class="t" style="left:9.6px;top:1.5px;color:#606266;font-size:7.35px"><span style="font-size:8.1px">15</span>条/页</div><svg class="abs" style="left:48.4px;top:4.8px" width="6.4" height="4" viewBox="-0.5 -0.5 6.4 4"><path d="M0 0 L2.7 3 L5.4 0" fill="none" stroke="#b4b8bf" stroke-width="0.8" stroke-linecap="round" stroke-linejoin="round"/></svg></div>
<div class="pg" style="left:242.4px"><svg class="abs" style="left:4.6px;top:3.4px" width="5" height="7.4" viewBox="-0.3 -0.5 5 7.4"><path d="M3.4 0.6 L0.8 3.2 L3.4 5.8" fill="none" stroke="#6a6e76" stroke-width="0.8" stroke-linecap="round" stroke-linejoin="round"/></svg></div>
<div class="pg" style="left:262px">1</div>
<div class="pg" style="left:281.4px;background:#4db4ca;color:#fff;font-weight:bold">2</div>
<div class="pg" style="left:300.8px">3</div>
<div class="pg" style="left:320.2px">4</div>
<div class="pg" style="left:339.6px"><svg class="abs" style="left:4.6px;top:3.4px" width="5" height="7.4" viewBox="-0.3 -0.5 5 7.4"><path d="M1 0.6 L3.6 3.2 L1 5.8" fill="none" stroke="#6a6e76" stroke-width="0.8" stroke-linecap="round" stroke-linejoin="round"/></svg></div>
<div class="pt" style="left:366px">前往</div>
<div class="inp" style="left:385.8px;top:454.6px;width:33.8px;height:14.6px;border-radius:2px"><div class="t" style="left:0;width:100%;text-align:center;top:1.5px;color:#606266;font-size:8.1px">2</div></div>
<div class="pt" style="left:427.3px">页</div>
<!--TABLE-->
</body></html>
